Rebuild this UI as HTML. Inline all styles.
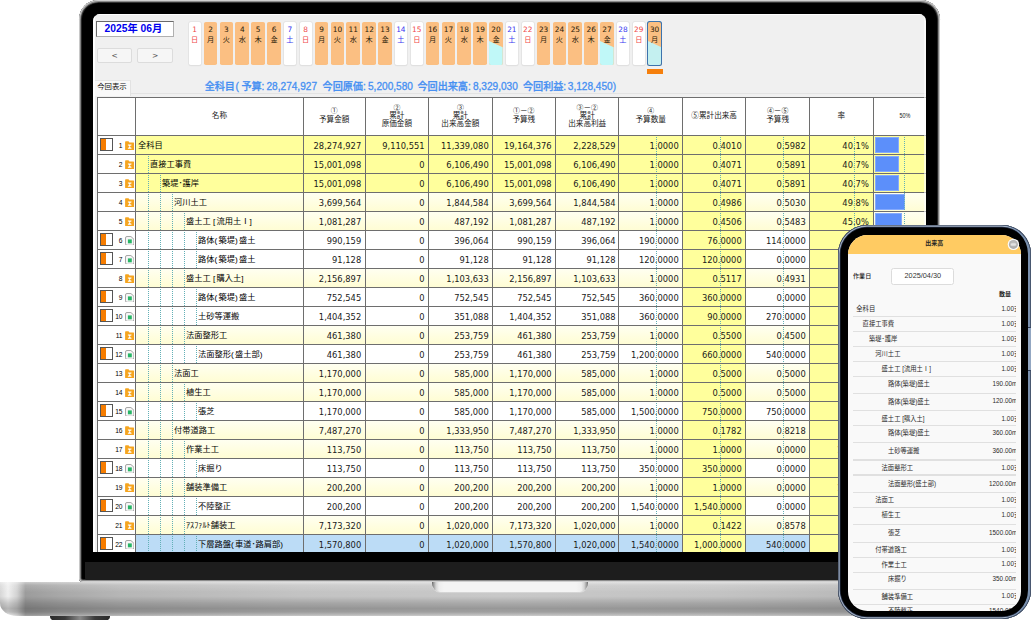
<!DOCTYPE html>
<html lang="ja"><head><meta charset="utf-8"><title>出来高</title>
<style>
html,body{margin:0;padding:0;background:#fff;}
body{width:1032px;height:620px;position:relative;overflow:hidden;font-family:"Liberation Sans","Noto Sans CJK JP",sans-serif;}
div,span,svg{position:absolute;box-sizing:border-box;}
.t{white-space:nowrap;line-height:1;}
.num{font-family:"DejaVu Sans","Liberation Sans",sans-serif;font-size:8px;color:#1a1a1a;text-align:right;white-space:nowrap;line-height:1;transform:scaleX(1.04);transform-origin:100% 50%;}
.nm{font-family:"Liberation Sans","Noto Sans CJK JP",sans-serif;font-size:7.7px;color:#000;white-space:nowrap;line-height:1;transform:scaleX(1.07);transform-origin:0 50%;}
.hd{font-family:"Liberation Sans","Noto Sans CJK JP",sans-serif;font-size:7.6px;color:#222;white-space:nowrap;line-height:7.4px;text-align:center;}
.rn{font-family:"Liberation Sans",sans-serif;font-size:7.6px;color:#000;text-align:right;white-space:nowrap;line-height:1;transform:scaleX(.88);transform-origin:100% 50%;}
.day{font-size:7.5px;line-height:1;text-align:center;white-space:nowrap;}
.c{position:static;font-size:6.9px;color:#111;}
.p{position:static;letter-spacing:1.2px;}
.pn{font-family:"Liberation Sans","Noto Sans CJK JP",sans-serif;font-size:6.3px;color:#2a2a2a;white-space:nowrap;line-height:1;}
.pv{font-family:"Liberation Sans","Noto Sans CJK JP",sans-serif;font-size:6.35px;color:#2a2a2a;white-space:nowrap;line-height:1;text-align:right;}
</style></head><body>

<div id="lid" style="left:79.2px;top:0px;width:861px;height:581.6px;background:#000;border-radius:19.5px 19.5px 4px 4px;box-shadow:inset 0 0 0 0.9px #d0d0d0, inset 0 0 0 1.9px #8c8c8c, inset 0 2.4px 0.8px -0.4px #a0a0a0, inset 0 0 0 2.9px #2c2c2c;"></div>
<div id="chin" style="left:84.8px;top:562.2px;width:849.6px;height:18.2px;background:#1d1d1d;border-radius:0 0 2px 2px;"></div>
<div id="base" style="left:0;top:581.5px;width:1019px;height:34.3px;border-radius:0 0 17px 17px / 0 0 13px 13px;background:linear-gradient(180deg,rgba(255,255,255,.5) 0%,rgba(255,255,255,.18) 9%,rgba(255,255,255,0) 30%,rgba(0,0,0,0) 42%,rgba(0,0,0,.15) 62%,rgba(0,0,0,.24) 78%,rgba(0,0,0,.2) 88%,rgba(0,0,0,.06) 96%,rgba(255,255,255,.1) 100%),linear-gradient(90deg,#d6d6d6 0px,#efefef 8px,#d2d2d2 17px,#9c9c9c 25.5px,#a8a8a8 60px,#b6b6b6 120px,#c3c3c3 300px,#c8c8c8 500px,#c3c3c3 719px,#b6b6b6 899px,#a8a8a8 959px,#9c9c9c 993.5px,#d2d2d2 1002px,#efefef 1011px,#d6d6d6 1019px);"></div>
<div style="left:431.6px;top:581.5px;width:156.2px;height:10.8px;border-radius:0 0 8px 8px / 0 0 9px 9px;background:linear-gradient(90deg,#5e5e5e 0,#9a9a9a 1.6px,#d4d4d4 4px,#eeeeee 7px,#f4f4f4 12px,#f4f4f4 144.2px,#eeeeee 149.2px,#d4d4d4 152.2px,#9a9a9a 154.6px,#5e5e5e 156.2px);box-shadow:0 0.6px 0.8px rgba(255,255,255,.5);"></div>
<div style="left:50px;top:615.6px;width:59.5px;height:6px;border-radius:0 0 10px 10px / 0 0 5px 5px;background:linear-gradient(90deg,#2a2a2a 0%,#3a3a3a 25%,#8a8a8a 50%,#3a3a3a 75%,#2a2a2a 100%);"></div>
<div id="screen" style="left:93.00px;top:13.60px;width:832.80px;height:538.30px;background:#f0f0f0;border-radius:7px 7px 0 0;overflow:hidden;">
<div style="left:2.60px;top:7.60px;width:78.40px;height:15.40px;background:#fff;border:1px solid;border-color:#6a6a6a #b0b0b0 #b0b0b0 #6a6a6a;"></div>
<div style="left:1.20px;top:7.60px;width:78.40px;height:15.40px;font-family:'Liberation Sans','Noto Sans CJK JP',sans-serif;font-weight:bold;font-size:10.3px;color:#0000ee;text-align:center;line-height:15.4px;white-space:nowrap;">2025年 06月</div>
<div style="left:4.00px;top:34.00px;width:35.40px;height:15.20px;background:#f6f6f6;border:1px solid #dcdcdc;border-radius:2px;font-family:'DejaVu Sans',sans-serif;font-size:7.5px;color:#555;text-align:center;line-height:13.4px;">&lt;</div>
<div style="left:44.40px;top:34.00px;width:35.40px;height:15.20px;background:#f6f6f6;border:1px solid #dcdcdc;border-radius:2px;font-family:'DejaVu Sans',sans-serif;font-size:7.5px;color:#555;text-align:center;line-height:13.4px;">&gt;</div>
<div style="left:95.75px;top:8.10px;width:11.90px;height:43.10px;background:#fff;border-radius:1.8px;box-shadow:0 0 0 0.8px #e2e2e2,0 1px 1px #d8d8d8;"></div>
<div class="day" style="left:91.75px;top:12.00px;width:19.90px;height:8.00px;color:#f04848;font-family:'DejaVu Sans','Liberation Sans',sans-serif;font-size:7.4px;">1</div>
<div class="day" style="left:91.75px;top:22.30px;width:19.90px;height:8.00px;color:#f04848;font-family:'Liberation Sans','Noto Sans CJK JP',sans-serif;font-size:7.2px;">日</div>
<div style="left:110.71px;top:8.10px;width:13.70px;height:43.10px;background:#fbbf82;border-radius:1.8px;"></div>
<div class="day" style="left:106.71px;top:12.00px;width:21.70px;height:8.00px;color:#2a1a08;font-family:'DejaVu Sans','Liberation Sans',sans-serif;font-size:7.4px;">2</div>
<div class="day" style="left:106.71px;top:22.30px;width:21.70px;height:8.00px;color:#2a1a08;font-family:'Liberation Sans','Noto Sans CJK JP',sans-serif;font-size:7.2px;">月</div>
<div style="left:126.57px;top:8.10px;width:13.70px;height:43.10px;background:#fbbf82;border-radius:1.8px;"></div>
<div class="day" style="left:122.57px;top:12.00px;width:21.70px;height:8.00px;color:#2a1a08;font-family:'DejaVu Sans','Liberation Sans',sans-serif;font-size:7.4px;">3</div>
<div class="day" style="left:122.57px;top:22.30px;width:21.70px;height:8.00px;color:#2a1a08;font-family:'Liberation Sans','Noto Sans CJK JP',sans-serif;font-size:7.2px;">火</div>
<div style="left:142.43px;top:8.10px;width:13.70px;height:43.10px;background:#fbbf82;border-radius:1.8px;"></div>
<div class="day" style="left:138.43px;top:12.00px;width:21.70px;height:8.00px;color:#2a1a08;font-family:'DejaVu Sans','Liberation Sans',sans-serif;font-size:7.4px;">4</div>
<div class="day" style="left:138.43px;top:22.30px;width:21.70px;height:8.00px;color:#2a1a08;font-family:'Liberation Sans','Noto Sans CJK JP',sans-serif;font-size:7.2px;">水</div>
<div style="left:158.29px;top:8.10px;width:13.70px;height:43.10px;background:#fbbf82;border-radius:1.8px;"></div>
<div class="day" style="left:154.29px;top:12.00px;width:21.70px;height:8.00px;color:#2a1a08;font-family:'DejaVu Sans','Liberation Sans',sans-serif;font-size:7.4px;">5</div>
<div class="day" style="left:154.29px;top:22.30px;width:21.70px;height:8.00px;color:#2a1a08;font-family:'Liberation Sans','Noto Sans CJK JP',sans-serif;font-size:7.2px;">木</div>
<div style="left:174.15px;top:8.10px;width:13.70px;height:43.10px;background:#fbbf82;border-radius:1.8px;"></div>
<div class="day" style="left:170.15px;top:12.00px;width:21.70px;height:8.00px;color:#2a1a08;font-family:'DejaVu Sans','Liberation Sans',sans-serif;font-size:7.4px;">6</div>
<div class="day" style="left:170.15px;top:22.30px;width:21.70px;height:8.00px;color:#2a1a08;font-family:'Liberation Sans','Noto Sans CJK JP',sans-serif;font-size:7.2px;">金</div>
<div style="left:190.91px;top:8.10px;width:11.90px;height:43.10px;background:#fff;border-radius:1.8px;box-shadow:0 0 0 0.8px #e2e2e2,0 1px 1px #d8d8d8;"></div>
<div class="day" style="left:186.91px;top:12.00px;width:19.90px;height:8.00px;color:#3838f0;font-family:'DejaVu Sans','Liberation Sans',sans-serif;font-size:7.4px;">7</div>
<div class="day" style="left:186.91px;top:22.30px;width:19.90px;height:8.00px;color:#3838f0;font-family:'Liberation Sans','Noto Sans CJK JP',sans-serif;font-size:7.2px;">土</div>
<div style="left:206.77px;top:8.10px;width:11.90px;height:43.10px;background:#fff;border-radius:1.8px;box-shadow:0 0 0 0.8px #e2e2e2,0 1px 1px #d8d8d8;"></div>
<div class="day" style="left:202.77px;top:12.00px;width:19.90px;height:8.00px;color:#f04848;font-family:'DejaVu Sans','Liberation Sans',sans-serif;font-size:7.4px;">8</div>
<div class="day" style="left:202.77px;top:22.30px;width:19.90px;height:8.00px;color:#f04848;font-family:'Liberation Sans','Noto Sans CJK JP',sans-serif;font-size:7.2px;">日</div>
<div style="left:221.73px;top:8.10px;width:13.70px;height:43.10px;background:#fbbf82;border-radius:1.8px;"></div>
<div class="day" style="left:217.73px;top:12.00px;width:21.70px;height:8.00px;color:#2a1a08;font-family:'DejaVu Sans','Liberation Sans',sans-serif;font-size:7.4px;">9</div>
<div class="day" style="left:217.73px;top:22.30px;width:21.70px;height:8.00px;color:#2a1a08;font-family:'Liberation Sans','Noto Sans CJK JP',sans-serif;font-size:7.2px;">月</div>
<div style="left:237.59px;top:8.10px;width:13.70px;height:43.10px;background:#fbbf82;border-radius:1.8px;"></div>
<div class="day" style="left:233.59px;top:12.00px;width:21.70px;height:8.00px;color:#2a1a08;font-family:'DejaVu Sans','Liberation Sans',sans-serif;font-size:7.4px;">10</div>
<div class="day" style="left:233.59px;top:22.30px;width:21.70px;height:8.00px;color:#2a1a08;font-family:'Liberation Sans','Noto Sans CJK JP',sans-serif;font-size:7.2px;">火</div>
<div style="left:253.45px;top:8.10px;width:13.70px;height:43.10px;background:#fbbf82;border-radius:1.8px;"></div>
<div class="day" style="left:249.45px;top:12.00px;width:21.70px;height:8.00px;color:#2a1a08;font-family:'DejaVu Sans','Liberation Sans',sans-serif;font-size:7.4px;">11</div>
<div class="day" style="left:249.45px;top:22.30px;width:21.70px;height:8.00px;color:#2a1a08;font-family:'Liberation Sans','Noto Sans CJK JP',sans-serif;font-size:7.2px;">水</div>
<div style="left:269.31px;top:8.10px;width:13.70px;height:43.10px;background:#fbbf82;border-radius:1.8px;"></div>
<div class="day" style="left:265.31px;top:12.00px;width:21.70px;height:8.00px;color:#2a1a08;font-family:'DejaVu Sans','Liberation Sans',sans-serif;font-size:7.4px;">12</div>
<div class="day" style="left:265.31px;top:22.30px;width:21.70px;height:8.00px;color:#2a1a08;font-family:'Liberation Sans','Noto Sans CJK JP',sans-serif;font-size:7.2px;">木</div>
<div style="left:285.17px;top:8.10px;width:13.70px;height:43.10px;background:#fbbf82;border-radius:1.8px;"></div>
<div class="day" style="left:281.17px;top:12.00px;width:21.70px;height:8.00px;color:#2a1a08;font-family:'DejaVu Sans','Liberation Sans',sans-serif;font-size:7.4px;">13</div>
<div class="day" style="left:281.17px;top:22.30px;width:21.70px;height:8.00px;color:#2a1a08;font-family:'Liberation Sans','Noto Sans CJK JP',sans-serif;font-size:7.2px;">金</div>
<div style="left:301.93px;top:8.10px;width:11.90px;height:43.10px;background:#fff;border-radius:1.8px;box-shadow:0 0 0 0.8px #e2e2e2,0 1px 1px #d8d8d8;"></div>
<div class="day" style="left:297.93px;top:12.00px;width:19.90px;height:8.00px;color:#3838f0;font-family:'DejaVu Sans','Liberation Sans',sans-serif;font-size:7.4px;">14</div>
<div class="day" style="left:297.93px;top:22.30px;width:19.90px;height:8.00px;color:#3838f0;font-family:'Liberation Sans','Noto Sans CJK JP',sans-serif;font-size:7.2px;">土</div>
<div style="left:317.79px;top:8.10px;width:11.90px;height:43.10px;background:#fff;border-radius:1.8px;box-shadow:0 0 0 0.8px #e2e2e2,0 1px 1px #d8d8d8;"></div>
<div class="day" style="left:313.79px;top:12.00px;width:19.90px;height:8.00px;color:#f04848;font-family:'DejaVu Sans','Liberation Sans',sans-serif;font-size:7.4px;">15</div>
<div class="day" style="left:313.79px;top:22.30px;width:19.90px;height:8.00px;color:#f04848;font-family:'Liberation Sans','Noto Sans CJK JP',sans-serif;font-size:7.2px;">日</div>
<div style="left:332.75px;top:8.10px;width:13.70px;height:43.10px;background:#fbbf82;border-radius:1.8px;"></div>
<div class="day" style="left:328.75px;top:12.00px;width:21.70px;height:8.00px;color:#2a1a08;font-family:'DejaVu Sans','Liberation Sans',sans-serif;font-size:7.4px;">16</div>
<div class="day" style="left:328.75px;top:22.30px;width:21.70px;height:8.00px;color:#2a1a08;font-family:'Liberation Sans','Noto Sans CJK JP',sans-serif;font-size:7.2px;">月</div>
<div style="left:348.61px;top:8.10px;width:13.70px;height:43.10px;background:#fbbf82;border-radius:1.8px;"></div>
<div class="day" style="left:344.61px;top:12.00px;width:21.70px;height:8.00px;color:#2a1a08;font-family:'DejaVu Sans','Liberation Sans',sans-serif;font-size:7.4px;">17</div>
<div class="day" style="left:344.61px;top:22.30px;width:21.70px;height:8.00px;color:#2a1a08;font-family:'Liberation Sans','Noto Sans CJK JP',sans-serif;font-size:7.2px;">火</div>
<div style="left:364.47px;top:8.10px;width:13.70px;height:43.10px;background:#fbbf82;border-radius:1.8px;"></div>
<div class="day" style="left:360.47px;top:12.00px;width:21.70px;height:8.00px;color:#2a1a08;font-family:'DejaVu Sans','Liberation Sans',sans-serif;font-size:7.4px;">18</div>
<div class="day" style="left:360.47px;top:22.30px;width:21.70px;height:8.00px;color:#2a1a08;font-family:'Liberation Sans','Noto Sans CJK JP',sans-serif;font-size:7.2px;">水</div>
<div style="left:380.33px;top:8.10px;width:13.70px;height:43.10px;background:#fbbf82;border-radius:1.8px;"></div>
<div class="day" style="left:376.33px;top:12.00px;width:21.70px;height:8.00px;color:#2a1a08;font-family:'DejaVu Sans','Liberation Sans',sans-serif;font-size:7.4px;">19</div>
<div class="day" style="left:376.33px;top:22.30px;width:21.70px;height:8.00px;color:#2a1a08;font-family:'Liberation Sans','Noto Sans CJK JP',sans-serif;font-size:7.2px;">木</div>
<div style="left:396.19px;top:8.10px;width:13.70px;height:43.10px;border-radius:2px;background:linear-gradient(to bottom,#fbbf82,#fbbf82);overflow:hidden;"><svg width="13.70" height="43.1" viewBox="0 0 13.70 43.1" style="left:0;top:0"><polygon points="0,19 13.70,25.2 13.70,43.1 0,43.1" fill="#c0f8f8"/></svg></div>
<div class="day" style="left:392.19px;top:12.00px;width:21.70px;height:8.00px;color:#2a1a08;font-family:'DejaVu Sans','Liberation Sans',sans-serif;font-size:7.4px;">20</div>
<div class="day" style="left:392.19px;top:22.30px;width:21.70px;height:8.00px;color:#2a1a08;font-family:'Liberation Sans','Noto Sans CJK JP',sans-serif;font-size:7.2px;">金</div>
<div style="left:412.95px;top:8.10px;width:11.90px;height:43.10px;background:#fff;border-radius:1.8px;box-shadow:0 0 0 0.8px #e2e2e2,0 1px 1px #d8d8d8;"></div>
<div class="day" style="left:408.95px;top:12.00px;width:19.90px;height:8.00px;color:#3838f0;font-family:'DejaVu Sans','Liberation Sans',sans-serif;font-size:7.4px;">21</div>
<div class="day" style="left:408.95px;top:22.30px;width:19.90px;height:8.00px;color:#3838f0;font-family:'Liberation Sans','Noto Sans CJK JP',sans-serif;font-size:7.2px;">土</div>
<div style="left:428.81px;top:8.10px;width:11.90px;height:43.10px;background:#fff;border-radius:1.8px;box-shadow:0 0 0 0.8px #e2e2e2,0 1px 1px #d8d8d8;"></div>
<div class="day" style="left:424.81px;top:12.00px;width:19.90px;height:8.00px;color:#f04848;font-family:'DejaVu Sans','Liberation Sans',sans-serif;font-size:7.4px;">22</div>
<div class="day" style="left:424.81px;top:22.30px;width:19.90px;height:8.00px;color:#f04848;font-family:'Liberation Sans','Noto Sans CJK JP',sans-serif;font-size:7.2px;">日</div>
<div style="left:443.77px;top:8.10px;width:13.70px;height:43.10px;background:#fbbf82;border-radius:1.8px;"></div>
<div class="day" style="left:439.77px;top:12.00px;width:21.70px;height:8.00px;color:#2a1a08;font-family:'DejaVu Sans','Liberation Sans',sans-serif;font-size:7.4px;">23</div>
<div class="day" style="left:439.77px;top:22.30px;width:21.70px;height:8.00px;color:#2a1a08;font-family:'Liberation Sans','Noto Sans CJK JP',sans-serif;font-size:7.2px;">月</div>
<div style="left:459.63px;top:8.10px;width:13.70px;height:43.10px;background:#fbbf82;border-radius:1.8px;"></div>
<div class="day" style="left:455.63px;top:12.00px;width:21.70px;height:8.00px;color:#2a1a08;font-family:'DejaVu Sans','Liberation Sans',sans-serif;font-size:7.4px;">24</div>
<div class="day" style="left:455.63px;top:22.30px;width:21.70px;height:8.00px;color:#2a1a08;font-family:'Liberation Sans','Noto Sans CJK JP',sans-serif;font-size:7.2px;">火</div>
<div style="left:475.49px;top:8.10px;width:13.70px;height:43.10px;background:#fbbf82;border-radius:1.8px;"></div>
<div class="day" style="left:471.49px;top:12.00px;width:21.70px;height:8.00px;color:#2a1a08;font-family:'DejaVu Sans','Liberation Sans',sans-serif;font-size:7.4px;">25</div>
<div class="day" style="left:471.49px;top:22.30px;width:21.70px;height:8.00px;color:#2a1a08;font-family:'Liberation Sans','Noto Sans CJK JP',sans-serif;font-size:7.2px;">水</div>
<div style="left:491.35px;top:8.10px;width:13.70px;height:43.10px;background:#fbbf82;border-radius:1.8px;"></div>
<div class="day" style="left:487.35px;top:12.00px;width:21.70px;height:8.00px;color:#2a1a08;font-family:'DejaVu Sans','Liberation Sans',sans-serif;font-size:7.4px;">26</div>
<div class="day" style="left:487.35px;top:22.30px;width:21.70px;height:8.00px;color:#2a1a08;font-family:'Liberation Sans','Noto Sans CJK JP',sans-serif;font-size:7.2px;">木</div>
<div style="left:507.21px;top:8.10px;width:13.70px;height:43.10px;border-radius:2px;background:linear-gradient(to bottom,#fbbf82,#fbbf82);overflow:hidden;"><svg width="13.70" height="43.1" viewBox="0 0 13.70 43.1" style="left:0;top:0"><polygon points="0,19 13.70,25.2 13.70,43.1 0,43.1" fill="#c0f8f8"/></svg></div>
<div class="day" style="left:503.21px;top:12.00px;width:21.70px;height:8.00px;color:#2a1a08;font-family:'DejaVu Sans','Liberation Sans',sans-serif;font-size:7.4px;">27</div>
<div class="day" style="left:503.21px;top:22.30px;width:21.70px;height:8.00px;color:#2a1a08;font-family:'Liberation Sans','Noto Sans CJK JP',sans-serif;font-size:7.2px;">金</div>
<div style="left:523.97px;top:8.10px;width:11.90px;height:43.10px;background:#fff;border-radius:1.8px;box-shadow:0 0 0 0.8px #e2e2e2,0 1px 1px #d8d8d8;"></div>
<div class="day" style="left:519.97px;top:12.00px;width:19.90px;height:8.00px;color:#3838f0;font-family:'DejaVu Sans','Liberation Sans',sans-serif;font-size:7.4px;">28</div>
<div class="day" style="left:519.97px;top:22.30px;width:19.90px;height:8.00px;color:#3838f0;font-family:'Liberation Sans','Noto Sans CJK JP',sans-serif;font-size:7.2px;">土</div>
<div style="left:539.83px;top:8.10px;width:11.90px;height:43.10px;background:#fff;border-radius:1.8px;box-shadow:0 0 0 0.8px #e2e2e2,0 1px 1px #d8d8d8;"></div>
<div class="day" style="left:535.83px;top:12.00px;width:19.90px;height:8.00px;color:#f04848;font-family:'DejaVu Sans','Liberation Sans',sans-serif;font-size:7.4px;">29</div>
<div class="day" style="left:535.83px;top:22.30px;width:19.90px;height:8.00px;color:#f04848;font-family:'Liberation Sans','Noto Sans CJK JP',sans-serif;font-size:7.2px;">日</div>
<div style="left:553.89px;top:7.30px;width:15.50px;height:44.70px;border-radius:2.5px;background:#3d73ad;"></div>
<div style="left:554.79px;top:8.10px;width:13.70px;height:43.10px;border-radius:2px;background:linear-gradient(to bottom,#fbbf82,#fbbf82);overflow:hidden;"><svg width="13.70" height="43.1" viewBox="0 0 13.70 43.1" style="left:0;top:0"><polygon points="0,19 13.70,25.2 13.70,43.1 0,43.1" fill="#c4f0f0"/></svg></div>
<div class="day" style="left:550.79px;top:12.00px;width:21.70px;height:8.00px;color:#2a1a08;font-family:'DejaVu Sans','Liberation Sans',sans-serif;font-size:7.4px;">30</div>
<div class="day" style="left:550.79px;top:22.30px;width:21.70px;height:8.00px;color:#2a1a08;font-family:'Liberation Sans','Noto Sans CJK JP',sans-serif;font-size:7.2px;">月</div>
<div style="left:553.90px;top:55.80px;width:15.90px;height:5.10px;background:#f57f0c;"></div>
<div style="left:0.00px;top:66.20px;width:38.40px;height:15.80px;background:#f9f9f9;border-top:1px solid #e6e6e6;border-right:1px solid #e2e2e2;"></div>
<div style="left:38.40px;top:79.00px;width:800.00px;height:1.40px;background:#e3e3e3;"></div>
<div class="t" style="left:4.20px;top:69.16px;width:40.00px;height:8.00px;font-size:7.4px;color:#111;">今回表示</div>
<div style="left:111.70px;top:68.20px;width:420.00px;height:11.00px;font-family:'Liberation Sans','Noto Sans CJK JP',sans-serif;font-weight:500;-webkit-text-stroke:0.3px #4790f2;font-size:10.1px;color:#4790f2;"><span class="t" style="left:0.0px;top:0">全科目</span><span class="t" style="left:30.7px;top:0">(</span><span class="t" style="left:36.7px;top:0">予算:</span><span class="t" style="left:61.8px;top:0">28,274,927</span><span class="t" style="left:117.9px;top:0">今回原価:</span><span class="t" style="left:163.3px;top:0">5,200,580</span><span class="t" style="left:212.8px;top:0">今回出来高:</span><span class="t" style="left:268.2px;top:0">8,329,030</span><span class="t" style="left:318.3px;top:0">今回利益:</span><span class="t" style="left:363.1px;top:0">3,128,450)</span></div>
<div style="left:4.20px;top:84.10px;width:828.60px;height:37.50px;background:#fff;"></div>
<div class="hd" style="left:42.60px;top:98.85px;width:167.60px;height:8.00px;line-height:8.0px;font-size:7.6px;">名称</div>
<div class="hd" style="left:210.20px;top:93.65px;width:62.00px;height:17.20px;line-height:8.6px;font-size:7.6px;"><span class="c">①</span><br>予算金額</div>
<div class="hd" style="left:272.20px;top:90.85px;width:63.40px;height:22.80px;line-height:7.6px;font-size:7.6px;"><span class="c">②</span><br>累計<br>原価金額</div>
<div class="hd" style="left:335.60px;top:90.85px;width:63.50px;height:22.80px;line-height:7.6px;font-size:7.6px;"><span class="c">③</span><br>累計<br>出来高金額</div>
<div class="hd" style="left:399.10px;top:93.65px;width:63.40px;height:17.20px;line-height:8.6px;font-size:7.6px;"><span class="c">①</span>－<span class="c">②</span><br>予算残</div>
<div class="hd" style="left:462.50px;top:90.85px;width:63.40px;height:22.80px;line-height:7.6px;font-size:7.6px;"><span class="c">③</span>－<span class="c">②</span><br>累計<br>出来高利益</div>
<div class="hd" style="left:525.90px;top:93.65px;width:63.50px;height:17.20px;line-height:8.6px;font-size:7.6px;"><span class="c">④</span><br>予算数量</div>
<div class="hd" style="left:589.40px;top:98.85px;width:63.50px;height:8.00px;line-height:8.0px;font-size:7.6px;">⑤累計出来高</div>
<div class="hd" style="left:652.90px;top:93.65px;width:63.50px;height:17.20px;line-height:8.6px;font-size:7.6px;"><span class="c">④</span>－<span class="c">⑤</span><br>予算残</div>
<div class="hd" style="left:716.40px;top:98.85px;width:63.60px;height:8.00px;line-height:8.0px;font-size:7.6px;">率</div>
<div class="hd" style="left:780.00px;top:98.85px;width:63.80px;height:8.00px;line-height:8.0px;font-size:7px;font-family:'Liberation Sans',sans-serif;transform:scaleX(.78);">50%</div>
<div style="left:4.20px;top:121.60px;width:38.40px;height:19.00px;background:#fff;"></div>
<div style="left:42.60px;top:121.60px;width:790.20px;height:19.00px;background:#ffff9c;"></div>
<div style="left:589.40px;top:121.60px;width:63.50px;height:19.00px;background:#ffff9c;"></div>
<div style="left:716.40px;top:121.60px;width:63.60px;height:19.00px;background:#ffff9c;"></div>
<div style="left:6.60px;top:124.70px;width:13.20px;height:12.80px;background:linear-gradient(90deg,#f57c00 0,#f57c00 42%,#fff 42%);border:0.9px solid #555;"></div>
<div class="rn" style="left:11.00px;top:128.30px;width:18.60px;height:8.00px;">1</div>
<div style="left:31.60px;top:127.00px;width:9.20px;height:9.50px;"><svg width="9.2" height="9.5" viewBox="0 0 9.2 9.5" style="left:0;top:0"><path d="M.9 .2h2.6l.9 1.3h3.9a.8.8 0 0 1 .8.8v6.1a.8.8 0 0 1-.8.8H.9a.8.8 0 0 1-.8-.8V1a.8.8 0 0 1 .8-.8z" fill="#f5a520"/><path d="M2.9 3.5h3.6v.9H5.9L4.9 5.6l1 1.2h.6v.9H2.9v-.9h.6l1-1.2-1-1.2h-.6z" fill="#fff"/></svg></div>
<div class="nm" style="left:45.00px;top:128.90px;width:160.00px;height:9.00px;">全科目</div>
<div class="num" style="left:210.20px;top:129.00px;width:58.20px;height:9.00px;">28,274,927</div>
<div class="num" style="left:272.20px;top:129.00px;width:59.60px;height:9.00px;">9,110,551</div>
<div class="num" style="left:335.60px;top:129.00px;width:59.70px;height:9.00px;">11,339,080</div>
<div class="num" style="left:399.10px;top:129.00px;width:59.60px;height:9.00px;">19,164,376</div>
<div class="num" style="left:462.50px;top:129.00px;width:59.60px;height:9.00px;">2,228,529</div>
<div class="num" style="left:525.90px;top:129.00px;width:59.70px;height:9.00px;">1.0000</div>
<div class="num" style="left:589.40px;top:129.00px;width:59.70px;height:9.00px;">0.4010</div>
<div class="num" style="left:652.90px;top:129.00px;width:59.70px;height:9.00px;">0.5982</div>
<div class="num" style="left:716.40px;top:129.00px;width:59.80px;height:9.00px;">40.1%</div>
<div style="left:782.00px;top:123.20px;width:24.06px;height:16.60px;background:#5c8ffa;border:0.6px solid #86aafc;"></div>
<div style="left:4.20px;top:140.60px;width:38.40px;height:19.00px;background:#fff;"></div>
<div style="left:42.60px;top:140.60px;width:790.20px;height:19.00px;background:#ffff9c;"></div>
<div style="left:589.40px;top:140.60px;width:63.50px;height:19.00px;background:#ffff9c;"></div>
<div style="left:716.40px;top:140.60px;width:63.60px;height:19.00px;background:#ffff9c;"></div>
<div class="rn" style="left:11.00px;top:147.30px;width:18.60px;height:8.00px;">2</div>
<div style="left:31.60px;top:146.00px;width:9.20px;height:9.50px;"><svg width="9.2" height="9.5" viewBox="0 0 9.2 9.5" style="left:0;top:0"><path d="M.9 .2h2.6l.9 1.3h3.9a.8.8 0 0 1 .8.8v6.1a.8.8 0 0 1-.8.8H.9a.8.8 0 0 1-.8-.8V1a.8.8 0 0 1 .8-.8z" fill="#f5a520"/><path d="M2.9 3.5h3.6v.9H5.9L4.9 5.6l1 1.2h.6v.9H2.9v-.9h.6l1-1.2-1-1.2h-.6z" fill="#fff"/></svg></div>
<div class="nm" style="left:57.03px;top:147.90px;width:160.00px;height:9.00px;">直接工事費</div>
<div class="num" style="left:210.20px;top:148.00px;width:58.20px;height:9.00px;">15,001,098</div>
<div class="num" style="left:272.20px;top:148.00px;width:59.60px;height:9.00px;">0</div>
<div class="num" style="left:335.60px;top:148.00px;width:59.70px;height:9.00px;">6,106,490</div>
<div class="num" style="left:399.10px;top:148.00px;width:59.60px;height:9.00px;">15,001,098</div>
<div class="num" style="left:462.50px;top:148.00px;width:59.60px;height:9.00px;">6,106,490</div>
<div class="num" style="left:525.90px;top:148.00px;width:59.70px;height:9.00px;">1.0000</div>
<div class="num" style="left:589.40px;top:148.00px;width:59.70px;height:9.00px;">0.4071</div>
<div class="num" style="left:652.90px;top:148.00px;width:59.70px;height:9.00px;">0.5891</div>
<div class="num" style="left:716.40px;top:148.00px;width:59.80px;height:9.00px;">40.7%</div>
<div style="left:782.00px;top:142.20px;width:24.42px;height:16.60px;background:#5c8ffa;border:0.6px solid #86aafc;"></div>
<div style="left:4.20px;top:159.60px;width:38.40px;height:19.00px;background:#fff;"></div>
<div style="left:42.60px;top:159.60px;width:790.20px;height:19.00px;background:#ffff9c;"></div>
<div style="left:589.40px;top:159.60px;width:63.50px;height:19.00px;background:#ffff9c;"></div>
<div style="left:716.40px;top:159.60px;width:63.60px;height:19.00px;background:#ffff9c;"></div>
<div class="rn" style="left:11.00px;top:166.30px;width:18.60px;height:8.00px;">3</div>
<div style="left:31.60px;top:165.00px;width:9.20px;height:9.50px;"><svg width="9.2" height="9.5" viewBox="0 0 9.2 9.5" style="left:0;top:0"><path d="M.9 .2h2.6l.9 1.3h3.9a.8.8 0 0 1 .8.8v6.1a.8.8 0 0 1-.8.8H.9a.8.8 0 0 1-.8-.8V1a.8.8 0 0 1 .8-.8z" fill="#f5a520"/><path d="M2.9 3.5h3.6v.9H5.9L4.9 5.6l1 1.2h.6v.9H2.9v-.9h.6l1-1.2-1-1.2h-.6z" fill="#fff"/></svg></div>
<div class="nm" style="left:69.06px;top:166.90px;width:160.00px;height:9.00px;">築堤･護岸</div>
<div class="num" style="left:210.20px;top:167.00px;width:58.20px;height:9.00px;">15,001,098</div>
<div class="num" style="left:272.20px;top:167.00px;width:59.60px;height:9.00px;">0</div>
<div class="num" style="left:335.60px;top:167.00px;width:59.70px;height:9.00px;">6,106,490</div>
<div class="num" style="left:399.10px;top:167.00px;width:59.60px;height:9.00px;">15,001,098</div>
<div class="num" style="left:462.50px;top:167.00px;width:59.60px;height:9.00px;">6,106,490</div>
<div class="num" style="left:525.90px;top:167.00px;width:59.70px;height:9.00px;">1.0000</div>
<div class="num" style="left:589.40px;top:167.00px;width:59.70px;height:9.00px;">0.4071</div>
<div class="num" style="left:652.90px;top:167.00px;width:59.70px;height:9.00px;">0.5891</div>
<div class="num" style="left:716.40px;top:167.00px;width:59.80px;height:9.00px;">40.7%</div>
<div style="left:782.00px;top:161.20px;width:24.42px;height:16.60px;background:#5c8ffa;border:0.6px solid #86aafc;"></div>
<div style="left:4.20px;top:178.60px;width:38.40px;height:19.00px;background:#fff;"></div>
<div style="left:42.60px;top:178.60px;width:790.20px;height:19.00px;background:linear-gradient(180deg,#fffff2,#fffdd4);"></div>
<div style="left:589.40px;top:178.60px;width:63.50px;height:19.00px;background:#ffff9c;"></div>
<div style="left:716.40px;top:178.60px;width:63.60px;height:19.00px;background:#ffff9c;"></div>
<div class="rn" style="left:11.00px;top:185.30px;width:18.60px;height:8.00px;">4</div>
<div style="left:31.60px;top:184.00px;width:9.20px;height:9.50px;"><svg width="9.2" height="9.5" viewBox="0 0 9.2 9.5" style="left:0;top:0"><path d="M.9 .2h2.6l.9 1.3h3.9a.8.8 0 0 1 .8.8v6.1a.8.8 0 0 1-.8.8H.9a.8.8 0 0 1-.8-.8V1a.8.8 0 0 1 .8-.8z" fill="#f5a520"/><path d="M2.9 3.5h3.6v.9H5.9L4.9 5.6l1 1.2h.6v.9H2.9v-.9h.6l1-1.2-1-1.2h-.6z" fill="#fff"/></svg></div>
<div class="nm" style="left:81.09px;top:185.90px;width:160.00px;height:9.00px;">河川土工</div>
<div class="num" style="left:210.20px;top:186.00px;width:58.20px;height:9.00px;">3,699,564</div>
<div class="num" style="left:272.20px;top:186.00px;width:59.60px;height:9.00px;">0</div>
<div class="num" style="left:335.60px;top:186.00px;width:59.70px;height:9.00px;">1,844,584</div>
<div class="num" style="left:399.10px;top:186.00px;width:59.60px;height:9.00px;">3,699,564</div>
<div class="num" style="left:462.50px;top:186.00px;width:59.60px;height:9.00px;">1,844,584</div>
<div class="num" style="left:525.90px;top:186.00px;width:59.70px;height:9.00px;">1.0000</div>
<div class="num" style="left:589.40px;top:186.00px;width:59.70px;height:9.00px;">0.4986</div>
<div class="num" style="left:652.90px;top:186.00px;width:59.70px;height:9.00px;">0.5030</div>
<div class="num" style="left:716.40px;top:186.00px;width:59.80px;height:9.00px;">49.8%</div>
<div style="left:782.00px;top:180.20px;width:29.88px;height:16.60px;background:#5c8ffa;border:0.6px solid #86aafc;"></div>
<div style="left:4.20px;top:197.60px;width:38.40px;height:19.00px;background:#fff;"></div>
<div style="left:42.60px;top:197.60px;width:790.20px;height:19.00px;background:linear-gradient(180deg,#fffff2,#fffdd4);"></div>
<div style="left:589.40px;top:197.60px;width:63.50px;height:19.00px;background:#ffff9c;"></div>
<div style="left:716.40px;top:197.60px;width:63.60px;height:19.00px;background:#ffff9c;"></div>
<div class="rn" style="left:11.00px;top:204.30px;width:18.60px;height:8.00px;">5</div>
<div style="left:31.60px;top:203.00px;width:9.20px;height:9.50px;"><svg width="9.2" height="9.5" viewBox="0 0 9.2 9.5" style="left:0;top:0"><path d="M.9 .2h2.6l.9 1.3h3.9a.8.8 0 0 1 .8.8v6.1a.8.8 0 0 1-.8.8H.9a.8.8 0 0 1-.8-.8V1a.8.8 0 0 1 .8-.8z" fill="#f5a520"/><path d="M2.9 3.5h3.6v.9H5.9L4.9 5.6l1 1.2h.6v.9H2.9v-.9h.6l1-1.2-1-1.2h-.6z" fill="#fff"/></svg></div>
<div class="nm" style="left:93.12px;top:204.90px;width:160.00px;height:9.00px;">盛土工 <span class="p">[</span>流用土Ⅰ<span class="p">]</span></div>
<div class="num" style="left:210.20px;top:205.00px;width:58.20px;height:9.00px;">1,081,287</div>
<div class="num" style="left:272.20px;top:205.00px;width:59.60px;height:9.00px;">0</div>
<div class="num" style="left:335.60px;top:205.00px;width:59.70px;height:9.00px;">487,192</div>
<div class="num" style="left:399.10px;top:205.00px;width:59.60px;height:9.00px;">1,081,287</div>
<div class="num" style="left:462.50px;top:205.00px;width:59.60px;height:9.00px;">487,192</div>
<div class="num" style="left:525.90px;top:205.00px;width:59.70px;height:9.00px;">1.0000</div>
<div class="num" style="left:589.40px;top:205.00px;width:59.70px;height:9.00px;">0.4506</div>
<div class="num" style="left:652.90px;top:205.00px;width:59.70px;height:9.00px;">0.5483</div>
<div class="num" style="left:716.40px;top:205.00px;width:59.80px;height:9.00px;">45.0%</div>
<div style="left:782.00px;top:199.20px;width:27.00px;height:16.60px;background:#5c8ffa;border:0.6px solid #86aafc;"></div>
<div style="left:4.20px;top:216.60px;width:38.40px;height:19.00px;background:#fff;"></div>
<div style="left:42.60px;top:216.60px;width:790.20px;height:19.00px;background:#fff;"></div>
<div style="left:589.40px;top:216.60px;width:63.50px;height:19.00px;background:#ffff9c;"></div>
<div style="left:716.40px;top:216.60px;width:63.60px;height:19.00px;background:#ffff9c;"></div>
<div style="left:6.60px;top:219.70px;width:13.20px;height:12.80px;background:linear-gradient(90deg,#f57c00 0,#f57c00 42%,#fff 42%);border:0.9px solid #555;"></div>
<div class="rn" style="left:11.00px;top:223.30px;width:18.60px;height:8.00px;">6</div>
<div style="left:31.50px;top:222.10px;width:9.40px;height:9.80px;"><svg width="9.4" height="9.8" viewBox="0 0 9.4 9.8" style="left:0;top:0"><path d="M.5 2A1.5 1.5 0 0 1 2 .5h3.9l3 2.7v4.6a1.5 1.5 0 0 1-1.5 1.5H2A1.5 1.5 0 0 1 .5 7.8z" fill="#f6f6f6" stroke="#909090" stroke-width=".8"/><rect x="2.9" y="3.4" width="3.9" height="3.9" fill="#27b566"/></svg></div>
<div class="nm" style="left:105.15px;top:223.90px;width:160.00px;height:9.00px;">路体<span class="p">(</span>築堤<span class="p">)</span>盛土</div>
<div class="num" style="left:210.20px;top:224.00px;width:58.20px;height:9.00px;">990,159</div>
<div class="num" style="left:272.20px;top:224.00px;width:59.60px;height:9.00px;">0</div>
<div class="num" style="left:335.60px;top:224.00px;width:59.70px;height:9.00px;">396,064</div>
<div class="num" style="left:399.10px;top:224.00px;width:59.60px;height:9.00px;">990,159</div>
<div class="num" style="left:462.50px;top:224.00px;width:59.60px;height:9.00px;">396,064</div>
<div class="num" style="left:525.90px;top:224.00px;width:59.70px;height:9.00px;">190.0000</div>
<div class="num" style="left:589.40px;top:224.00px;width:59.70px;height:9.00px;">76.0000</div>
<div class="num" style="left:652.90px;top:224.00px;width:59.70px;height:9.00px;">114.0000</div>
<div style="left:4.20px;top:235.60px;width:38.40px;height:19.00px;background:#fff;"></div>
<div style="left:42.60px;top:235.60px;width:790.20px;height:19.00px;background:#fff;"></div>
<div style="left:589.40px;top:235.60px;width:63.50px;height:19.00px;background:#ffff9c;"></div>
<div style="left:716.40px;top:235.60px;width:63.60px;height:19.00px;background:#ffff9c;"></div>
<div style="left:6.60px;top:238.70px;width:13.20px;height:12.80px;background:linear-gradient(90deg,#f57c00 0,#f57c00 42%,#fff 42%);border:0.9px solid #555;"></div>
<div class="rn" style="left:11.00px;top:242.30px;width:18.60px;height:8.00px;">7</div>
<div style="left:31.50px;top:241.10px;width:9.40px;height:9.80px;"><svg width="9.4" height="9.8" viewBox="0 0 9.4 9.8" style="left:0;top:0"><path d="M.5 2A1.5 1.5 0 0 1 2 .5h3.9l3 2.7v4.6a1.5 1.5 0 0 1-1.5 1.5H2A1.5 1.5 0 0 1 .5 7.8z" fill="#f6f6f6" stroke="#909090" stroke-width=".8"/><rect x="2.9" y="3.4" width="3.9" height="3.9" fill="#27b566"/></svg></div>
<div class="nm" style="left:105.15px;top:242.90px;width:160.00px;height:9.00px;">路体<span class="p">(</span>築堤<span class="p">)</span>盛土</div>
<div class="num" style="left:210.20px;top:243.00px;width:58.20px;height:9.00px;">91,128</div>
<div class="num" style="left:272.20px;top:243.00px;width:59.60px;height:9.00px;">0</div>
<div class="num" style="left:335.60px;top:243.00px;width:59.70px;height:9.00px;">91,128</div>
<div class="num" style="left:399.10px;top:243.00px;width:59.60px;height:9.00px;">91,128</div>
<div class="num" style="left:462.50px;top:243.00px;width:59.60px;height:9.00px;">91,128</div>
<div class="num" style="left:525.90px;top:243.00px;width:59.70px;height:9.00px;">120.0000</div>
<div class="num" style="left:589.40px;top:243.00px;width:59.70px;height:9.00px;">120.0000</div>
<div class="num" style="left:652.90px;top:243.00px;width:59.70px;height:9.00px;">0.0000</div>
<div style="left:4.20px;top:254.60px;width:38.40px;height:19.00px;background:#fff;"></div>
<div style="left:42.60px;top:254.60px;width:790.20px;height:19.00px;background:linear-gradient(180deg,#fffff2,#fffdd4);"></div>
<div style="left:589.40px;top:254.60px;width:63.50px;height:19.00px;background:#ffff9c;"></div>
<div style="left:716.40px;top:254.60px;width:63.60px;height:19.00px;background:#ffff9c;"></div>
<div class="rn" style="left:11.00px;top:261.30px;width:18.60px;height:8.00px;">8</div>
<div style="left:31.60px;top:260.00px;width:9.20px;height:9.50px;"><svg width="9.2" height="9.5" viewBox="0 0 9.2 9.5" style="left:0;top:0"><path d="M.9 .2h2.6l.9 1.3h3.9a.8.8 0 0 1 .8.8v6.1a.8.8 0 0 1-.8.8H.9a.8.8 0 0 1-.8-.8V1a.8.8 0 0 1 .8-.8z" fill="#f5a520"/><path d="M2.9 3.5h3.6v.9H5.9L4.9 5.6l1 1.2h.6v.9H2.9v-.9h.6l1-1.2-1-1.2h-.6z" fill="#fff"/></svg></div>
<div class="nm" style="left:93.12px;top:261.90px;width:160.00px;height:9.00px;">盛土工 <span class="p">[</span>購入土<span class="p">]</span></div>
<div class="num" style="left:210.20px;top:262.00px;width:58.20px;height:9.00px;">2,156,897</div>
<div class="num" style="left:272.20px;top:262.00px;width:59.60px;height:9.00px;">0</div>
<div class="num" style="left:335.60px;top:262.00px;width:59.70px;height:9.00px;">1,103,633</div>
<div class="num" style="left:399.10px;top:262.00px;width:59.60px;height:9.00px;">2,156,897</div>
<div class="num" style="left:462.50px;top:262.00px;width:59.60px;height:9.00px;">1,103,633</div>
<div class="num" style="left:525.90px;top:262.00px;width:59.70px;height:9.00px;">1.0000</div>
<div class="num" style="left:589.40px;top:262.00px;width:59.70px;height:9.00px;">0.5117</div>
<div class="num" style="left:652.90px;top:262.00px;width:59.70px;height:9.00px;">0.4931</div>
<div class="num" style="left:716.40px;top:262.00px;width:59.80px;height:9.00px;">51.2%</div>
<div style="left:782.00px;top:256.20px;width:30.72px;height:16.60px;background:#5c8ffa;border:0.6px solid #86aafc;"></div>
<div style="left:4.20px;top:273.60px;width:38.40px;height:19.00px;background:#fff;"></div>
<div style="left:42.60px;top:273.60px;width:790.20px;height:19.00px;background:#fff;"></div>
<div style="left:589.40px;top:273.60px;width:63.50px;height:19.00px;background:#ffff9c;"></div>
<div style="left:716.40px;top:273.60px;width:63.60px;height:19.00px;background:#ffff9c;"></div>
<div style="left:6.60px;top:276.70px;width:13.20px;height:12.80px;background:linear-gradient(90deg,#f57c00 0,#f57c00 42%,#fff 42%);border:0.9px solid #555;"></div>
<div class="rn" style="left:11.00px;top:280.30px;width:18.60px;height:8.00px;">9</div>
<div style="left:31.50px;top:279.10px;width:9.40px;height:9.80px;"><svg width="9.4" height="9.8" viewBox="0 0 9.4 9.8" style="left:0;top:0"><path d="M.5 2A1.5 1.5 0 0 1 2 .5h3.9l3 2.7v4.6a1.5 1.5 0 0 1-1.5 1.5H2A1.5 1.5 0 0 1 .5 7.8z" fill="#f6f6f6" stroke="#909090" stroke-width=".8"/><rect x="2.9" y="3.4" width="3.9" height="3.9" fill="#27b566"/></svg></div>
<div class="nm" style="left:105.15px;top:280.90px;width:160.00px;height:9.00px;">路体<span class="p">(</span>築堤<span class="p">)</span>盛土</div>
<div class="num" style="left:210.20px;top:281.00px;width:58.20px;height:9.00px;">752,545</div>
<div class="num" style="left:272.20px;top:281.00px;width:59.60px;height:9.00px;">0</div>
<div class="num" style="left:335.60px;top:281.00px;width:59.70px;height:9.00px;">752,545</div>
<div class="num" style="left:399.10px;top:281.00px;width:59.60px;height:9.00px;">752,545</div>
<div class="num" style="left:462.50px;top:281.00px;width:59.60px;height:9.00px;">752,545</div>
<div class="num" style="left:525.90px;top:281.00px;width:59.70px;height:9.00px;">360.0000</div>
<div class="num" style="left:589.40px;top:281.00px;width:59.70px;height:9.00px;">360.0000</div>
<div class="num" style="left:652.90px;top:281.00px;width:59.70px;height:9.00px;">0.0000</div>
<div style="left:4.20px;top:292.60px;width:38.40px;height:19.00px;background:#fff;"></div>
<div style="left:42.60px;top:292.60px;width:790.20px;height:19.00px;background:#fff;"></div>
<div style="left:589.40px;top:292.60px;width:63.50px;height:19.00px;background:#ffff9c;"></div>
<div style="left:716.40px;top:292.60px;width:63.60px;height:19.00px;background:#ffff9c;"></div>
<div style="left:6.60px;top:295.70px;width:13.20px;height:12.80px;background:linear-gradient(90deg,#f57c00 0,#f57c00 42%,#fff 42%);border:0.9px solid #555;"></div>
<div class="rn" style="left:11.00px;top:299.30px;width:18.60px;height:8.00px;">10</div>
<div style="left:31.50px;top:298.10px;width:9.40px;height:9.80px;"><svg width="9.4" height="9.8" viewBox="0 0 9.4 9.8" style="left:0;top:0"><path d="M.5 2A1.5 1.5 0 0 1 2 .5h3.9l3 2.7v4.6a1.5 1.5 0 0 1-1.5 1.5H2A1.5 1.5 0 0 1 .5 7.8z" fill="#f6f6f6" stroke="#909090" stroke-width=".8"/><rect x="2.9" y="3.4" width="3.9" height="3.9" fill="#27b566"/></svg></div>
<div class="nm" style="left:105.15px;top:299.90px;width:160.00px;height:9.00px;">土砂等運搬</div>
<div class="num" style="left:210.20px;top:300.00px;width:58.20px;height:9.00px;">1,404,352</div>
<div class="num" style="left:272.20px;top:300.00px;width:59.60px;height:9.00px;">0</div>
<div class="num" style="left:335.60px;top:300.00px;width:59.70px;height:9.00px;">351,088</div>
<div class="num" style="left:399.10px;top:300.00px;width:59.60px;height:9.00px;">1,404,352</div>
<div class="num" style="left:462.50px;top:300.00px;width:59.60px;height:9.00px;">351,088</div>
<div class="num" style="left:525.90px;top:300.00px;width:59.70px;height:9.00px;">360.0000</div>
<div class="num" style="left:589.40px;top:300.00px;width:59.70px;height:9.00px;">90.0000</div>
<div class="num" style="left:652.90px;top:300.00px;width:59.70px;height:9.00px;">270.0000</div>
<div style="left:4.20px;top:311.60px;width:38.40px;height:19.00px;background:#fff;"></div>
<div style="left:42.60px;top:311.60px;width:790.20px;height:19.00px;background:linear-gradient(180deg,#fffff2,#fffdd4);"></div>
<div style="left:589.40px;top:311.60px;width:63.50px;height:19.00px;background:#ffff9c;"></div>
<div style="left:716.40px;top:311.60px;width:63.60px;height:19.00px;background:#ffff9c;"></div>
<div class="rn" style="left:11.00px;top:318.30px;width:18.60px;height:8.00px;">11</div>
<div style="left:31.60px;top:317.00px;width:9.20px;height:9.50px;"><svg width="9.2" height="9.5" viewBox="0 0 9.2 9.5" style="left:0;top:0"><path d="M.9 .2h2.6l.9 1.3h3.9a.8.8 0 0 1 .8.8v6.1a.8.8 0 0 1-.8.8H.9a.8.8 0 0 1-.8-.8V1a.8.8 0 0 1 .8-.8z" fill="#f5a520"/><path d="M2.9 3.5h3.6v.9H5.9L4.9 5.6l1 1.2h.6v.9H2.9v-.9h.6l1-1.2-1-1.2h-.6z" fill="#fff"/></svg></div>
<div class="nm" style="left:93.12px;top:318.90px;width:160.00px;height:9.00px;">法面整形工</div>
<div class="num" style="left:210.20px;top:319.00px;width:58.20px;height:9.00px;">461,380</div>
<div class="num" style="left:272.20px;top:319.00px;width:59.60px;height:9.00px;">0</div>
<div class="num" style="left:335.60px;top:319.00px;width:59.70px;height:9.00px;">253,759</div>
<div class="num" style="left:399.10px;top:319.00px;width:59.60px;height:9.00px;">461,380</div>
<div class="num" style="left:462.50px;top:319.00px;width:59.60px;height:9.00px;">253,759</div>
<div class="num" style="left:525.90px;top:319.00px;width:59.70px;height:9.00px;">1.0000</div>
<div class="num" style="left:589.40px;top:319.00px;width:59.70px;height:9.00px;">0.5500</div>
<div class="num" style="left:652.90px;top:319.00px;width:59.70px;height:9.00px;">0.4500</div>
<div class="num" style="left:716.40px;top:319.00px;width:59.80px;height:9.00px;">55.0%</div>
<div style="left:782.00px;top:313.20px;width:33.00px;height:16.60px;background:#5c8ffa;border:0.6px solid #86aafc;"></div>
<div style="left:4.20px;top:330.60px;width:38.40px;height:19.00px;background:#fff;"></div>
<div style="left:42.60px;top:330.60px;width:790.20px;height:19.00px;background:#fff;"></div>
<div style="left:589.40px;top:330.60px;width:63.50px;height:19.00px;background:#ffff9c;"></div>
<div style="left:716.40px;top:330.60px;width:63.60px;height:19.00px;background:#ffff9c;"></div>
<div style="left:6.60px;top:333.70px;width:13.20px;height:12.80px;background:linear-gradient(90deg,#f57c00 0,#f57c00 42%,#fff 42%);border:0.9px solid #555;"></div>
<div class="rn" style="left:11.00px;top:337.30px;width:18.60px;height:8.00px;">12</div>
<div style="left:31.50px;top:336.10px;width:9.40px;height:9.80px;"><svg width="9.4" height="9.8" viewBox="0 0 9.4 9.8" style="left:0;top:0"><path d="M.5 2A1.5 1.5 0 0 1 2 .5h3.9l3 2.7v4.6a1.5 1.5 0 0 1-1.5 1.5H2A1.5 1.5 0 0 1 .5 7.8z" fill="#f6f6f6" stroke="#909090" stroke-width=".8"/><rect x="2.9" y="3.4" width="3.9" height="3.9" fill="#27b566"/></svg></div>
<div class="nm" style="left:105.15px;top:337.90px;width:160.00px;height:9.00px;">法面整形<span class="p">(</span>盛土部<span class="p">)</span></div>
<div class="num" style="left:210.20px;top:338.00px;width:58.20px;height:9.00px;">461,380</div>
<div class="num" style="left:272.20px;top:338.00px;width:59.60px;height:9.00px;">0</div>
<div class="num" style="left:335.60px;top:338.00px;width:59.70px;height:9.00px;">253,759</div>
<div class="num" style="left:399.10px;top:338.00px;width:59.60px;height:9.00px;">461,380</div>
<div class="num" style="left:462.50px;top:338.00px;width:59.60px;height:9.00px;">253,759</div>
<div class="num" style="left:525.90px;top:338.00px;width:59.70px;height:9.00px;">1,200.0000</div>
<div class="num" style="left:589.40px;top:338.00px;width:59.70px;height:9.00px;">660.0000</div>
<div class="num" style="left:652.90px;top:338.00px;width:59.70px;height:9.00px;">540.0000</div>
<div style="left:4.20px;top:349.60px;width:38.40px;height:19.00px;background:#fff;"></div>
<div style="left:42.60px;top:349.60px;width:790.20px;height:19.00px;background:linear-gradient(180deg,#fffff2,#fffdd4);"></div>
<div style="left:589.40px;top:349.60px;width:63.50px;height:19.00px;background:#ffff9c;"></div>
<div style="left:716.40px;top:349.60px;width:63.60px;height:19.00px;background:#ffff9c;"></div>
<div class="rn" style="left:11.00px;top:356.30px;width:18.60px;height:8.00px;">13</div>
<div style="left:31.60px;top:355.00px;width:9.20px;height:9.50px;"><svg width="9.2" height="9.5" viewBox="0 0 9.2 9.5" style="left:0;top:0"><path d="M.9 .2h2.6l.9 1.3h3.9a.8.8 0 0 1 .8.8v6.1a.8.8 0 0 1-.8.8H.9a.8.8 0 0 1-.8-.8V1a.8.8 0 0 1 .8-.8z" fill="#f5a520"/><path d="M2.9 3.5h3.6v.9H5.9L4.9 5.6l1 1.2h.6v.9H2.9v-.9h.6l1-1.2-1-1.2h-.6z" fill="#fff"/></svg></div>
<div class="nm" style="left:81.09px;top:356.90px;width:160.00px;height:9.00px;">法面工</div>
<div class="num" style="left:210.20px;top:357.00px;width:58.20px;height:9.00px;">1,170,000</div>
<div class="num" style="left:272.20px;top:357.00px;width:59.60px;height:9.00px;">0</div>
<div class="num" style="left:335.60px;top:357.00px;width:59.70px;height:9.00px;">585,000</div>
<div class="num" style="left:399.10px;top:357.00px;width:59.60px;height:9.00px;">1,170,000</div>
<div class="num" style="left:462.50px;top:357.00px;width:59.60px;height:9.00px;">585,000</div>
<div class="num" style="left:525.90px;top:357.00px;width:59.70px;height:9.00px;">1.0000</div>
<div class="num" style="left:589.40px;top:357.00px;width:59.70px;height:9.00px;">0.5000</div>
<div class="num" style="left:652.90px;top:357.00px;width:59.70px;height:9.00px;">0.5000</div>
<div class="num" style="left:716.40px;top:357.00px;width:59.80px;height:9.00px;">50.0%</div>
<div style="left:782.00px;top:351.20px;width:30.00px;height:16.60px;background:#5c8ffa;border:0.6px solid #86aafc;"></div>
<div style="left:4.20px;top:368.60px;width:38.40px;height:19.00px;background:#fff;"></div>
<div style="left:42.60px;top:368.60px;width:790.20px;height:19.00px;background:linear-gradient(180deg,#fffff2,#fffdd4);"></div>
<div style="left:589.40px;top:368.60px;width:63.50px;height:19.00px;background:#ffff9c;"></div>
<div style="left:716.40px;top:368.60px;width:63.60px;height:19.00px;background:#ffff9c;"></div>
<div class="rn" style="left:11.00px;top:375.30px;width:18.60px;height:8.00px;">14</div>
<div style="left:31.60px;top:374.00px;width:9.20px;height:9.50px;"><svg width="9.2" height="9.5" viewBox="0 0 9.2 9.5" style="left:0;top:0"><path d="M.9 .2h2.6l.9 1.3h3.9a.8.8 0 0 1 .8.8v6.1a.8.8 0 0 1-.8.8H.9a.8.8 0 0 1-.8-.8V1a.8.8 0 0 1 .8-.8z" fill="#f5a520"/><path d="M2.9 3.5h3.6v.9H5.9L4.9 5.6l1 1.2h.6v.9H2.9v-.9h.6l1-1.2-1-1.2h-.6z" fill="#fff"/></svg></div>
<div class="nm" style="left:93.12px;top:375.90px;width:160.00px;height:9.00px;">植生工</div>
<div class="num" style="left:210.20px;top:376.00px;width:58.20px;height:9.00px;">1,170,000</div>
<div class="num" style="left:272.20px;top:376.00px;width:59.60px;height:9.00px;">0</div>
<div class="num" style="left:335.60px;top:376.00px;width:59.70px;height:9.00px;">585,000</div>
<div class="num" style="left:399.10px;top:376.00px;width:59.60px;height:9.00px;">1,170,000</div>
<div class="num" style="left:462.50px;top:376.00px;width:59.60px;height:9.00px;">585,000</div>
<div class="num" style="left:525.90px;top:376.00px;width:59.70px;height:9.00px;">1.0000</div>
<div class="num" style="left:589.40px;top:376.00px;width:59.70px;height:9.00px;">0.5000</div>
<div class="num" style="left:652.90px;top:376.00px;width:59.70px;height:9.00px;">0.5000</div>
<div class="num" style="left:716.40px;top:376.00px;width:59.80px;height:9.00px;">50.0%</div>
<div style="left:782.00px;top:370.20px;width:30.00px;height:16.60px;background:#5c8ffa;border:0.6px solid #86aafc;"></div>
<div style="left:4.20px;top:387.60px;width:38.40px;height:19.00px;background:#fff;"></div>
<div style="left:42.60px;top:387.60px;width:790.20px;height:19.00px;background:#fff;"></div>
<div style="left:589.40px;top:387.60px;width:63.50px;height:19.00px;background:#ffff9c;"></div>
<div style="left:716.40px;top:387.60px;width:63.60px;height:19.00px;background:#ffff9c;"></div>
<div style="left:6.60px;top:390.70px;width:13.20px;height:12.80px;background:linear-gradient(90deg,#f57c00 0,#f57c00 42%,#fff 42%);border:0.9px solid #555;"></div>
<div class="rn" style="left:11.00px;top:394.30px;width:18.60px;height:8.00px;">15</div>
<div style="left:31.50px;top:393.10px;width:9.40px;height:9.80px;"><svg width="9.4" height="9.8" viewBox="0 0 9.4 9.8" style="left:0;top:0"><path d="M.5 2A1.5 1.5 0 0 1 2 .5h3.9l3 2.7v4.6a1.5 1.5 0 0 1-1.5 1.5H2A1.5 1.5 0 0 1 .5 7.8z" fill="#f6f6f6" stroke="#909090" stroke-width=".8"/><rect x="2.9" y="3.4" width="3.9" height="3.9" fill="#27b566"/></svg></div>
<div class="nm" style="left:105.15px;top:394.90px;width:160.00px;height:9.00px;">張芝</div>
<div class="num" style="left:210.20px;top:395.00px;width:58.20px;height:9.00px;">1,170,000</div>
<div class="num" style="left:272.20px;top:395.00px;width:59.60px;height:9.00px;">0</div>
<div class="num" style="left:335.60px;top:395.00px;width:59.70px;height:9.00px;">585,000</div>
<div class="num" style="left:399.10px;top:395.00px;width:59.60px;height:9.00px;">1,170,000</div>
<div class="num" style="left:462.50px;top:395.00px;width:59.60px;height:9.00px;">585,000</div>
<div class="num" style="left:525.90px;top:395.00px;width:59.70px;height:9.00px;">1,500.0000</div>
<div class="num" style="left:589.40px;top:395.00px;width:59.70px;height:9.00px;">750.0000</div>
<div class="num" style="left:652.90px;top:395.00px;width:59.70px;height:9.00px;">750.0000</div>
<div style="left:4.20px;top:406.60px;width:38.40px;height:19.00px;background:#fff;"></div>
<div style="left:42.60px;top:406.60px;width:790.20px;height:19.00px;background:linear-gradient(180deg,#fffff2,#fffdd4);"></div>
<div style="left:589.40px;top:406.60px;width:63.50px;height:19.00px;background:#ffff9c;"></div>
<div style="left:716.40px;top:406.60px;width:63.60px;height:19.00px;background:#ffff9c;"></div>
<div class="rn" style="left:11.00px;top:413.30px;width:18.60px;height:8.00px;">16</div>
<div style="left:31.60px;top:412.00px;width:9.20px;height:9.50px;"><svg width="9.2" height="9.5" viewBox="0 0 9.2 9.5" style="left:0;top:0"><path d="M.9 .2h2.6l.9 1.3h3.9a.8.8 0 0 1 .8.8v6.1a.8.8 0 0 1-.8.8H.9a.8.8 0 0 1-.8-.8V1a.8.8 0 0 1 .8-.8z" fill="#f5a520"/><path d="M2.9 3.5h3.6v.9H5.9L4.9 5.6l1 1.2h.6v.9H2.9v-.9h.6l1-1.2-1-1.2h-.6z" fill="#fff"/></svg></div>
<div class="nm" style="left:81.09px;top:413.90px;width:160.00px;height:9.00px;">付帯道路工</div>
<div class="num" style="left:210.20px;top:414.00px;width:58.20px;height:9.00px;">7,487,270</div>
<div class="num" style="left:272.20px;top:414.00px;width:59.60px;height:9.00px;">0</div>
<div class="num" style="left:335.60px;top:414.00px;width:59.70px;height:9.00px;">1,333,950</div>
<div class="num" style="left:399.10px;top:414.00px;width:59.60px;height:9.00px;">7,487,270</div>
<div class="num" style="left:462.50px;top:414.00px;width:59.60px;height:9.00px;">1,333,950</div>
<div class="num" style="left:525.90px;top:414.00px;width:59.70px;height:9.00px;">1.0000</div>
<div class="num" style="left:589.40px;top:414.00px;width:59.70px;height:9.00px;">0.1782</div>
<div class="num" style="left:652.90px;top:414.00px;width:59.70px;height:9.00px;">0.8218</div>
<div class="num" style="left:716.40px;top:414.00px;width:59.80px;height:9.00px;">17.8%</div>
<div style="left:782.00px;top:408.20px;width:10.68px;height:16.60px;background:#5c8ffa;border:0.6px solid #86aafc;"></div>
<div style="left:4.20px;top:425.60px;width:38.40px;height:19.00px;background:#fff;"></div>
<div style="left:42.60px;top:425.60px;width:790.20px;height:19.00px;background:linear-gradient(180deg,#fffff2,#fffdd4);"></div>
<div style="left:589.40px;top:425.60px;width:63.50px;height:19.00px;background:#ffff9c;"></div>
<div style="left:716.40px;top:425.60px;width:63.60px;height:19.00px;background:#ffff9c;"></div>
<div class="rn" style="left:11.00px;top:432.30px;width:18.60px;height:8.00px;">17</div>
<div style="left:31.60px;top:431.00px;width:9.20px;height:9.50px;"><svg width="9.2" height="9.5" viewBox="0 0 9.2 9.5" style="left:0;top:0"><path d="M.9 .2h2.6l.9 1.3h3.9a.8.8 0 0 1 .8.8v6.1a.8.8 0 0 1-.8.8H.9a.8.8 0 0 1-.8-.8V1a.8.8 0 0 1 .8-.8z" fill="#f5a520"/><path d="M2.9 3.5h3.6v.9H5.9L4.9 5.6l1 1.2h.6v.9H2.9v-.9h.6l1-1.2-1-1.2h-.6z" fill="#fff"/></svg></div>
<div class="nm" style="left:93.12px;top:432.90px;width:160.00px;height:9.00px;">作業土工</div>
<div class="num" style="left:210.20px;top:433.00px;width:58.20px;height:9.00px;">113,750</div>
<div class="num" style="left:272.20px;top:433.00px;width:59.60px;height:9.00px;">0</div>
<div class="num" style="left:335.60px;top:433.00px;width:59.70px;height:9.00px;">113,750</div>
<div class="num" style="left:399.10px;top:433.00px;width:59.60px;height:9.00px;">113,750</div>
<div class="num" style="left:462.50px;top:433.00px;width:59.60px;height:9.00px;">113,750</div>
<div class="num" style="left:525.90px;top:433.00px;width:59.70px;height:9.00px;">1.0000</div>
<div class="num" style="left:589.40px;top:433.00px;width:59.70px;height:9.00px;">1.0000</div>
<div class="num" style="left:652.90px;top:433.00px;width:59.70px;height:9.00px;">0.0000</div>
<div class="num" style="left:716.40px;top:433.00px;width:59.80px;height:9.00px;">100.0%</div>
<div style="left:782.00px;top:427.20px;width:60.00px;height:16.60px;background:#5c8ffa;border:0.6px solid #86aafc;"></div>
<div style="left:4.20px;top:444.60px;width:38.40px;height:19.00px;background:#fff;"></div>
<div style="left:42.60px;top:444.60px;width:790.20px;height:19.00px;background:#fff;"></div>
<div style="left:589.40px;top:444.60px;width:63.50px;height:19.00px;background:#ffff9c;"></div>
<div style="left:716.40px;top:444.60px;width:63.60px;height:19.00px;background:#ffff9c;"></div>
<div style="left:6.60px;top:447.70px;width:13.20px;height:12.80px;background:linear-gradient(90deg,#f57c00 0,#f57c00 42%,#fff 42%);border:0.9px solid #555;"></div>
<div class="rn" style="left:11.00px;top:451.30px;width:18.60px;height:8.00px;">18</div>
<div style="left:31.50px;top:450.10px;width:9.40px;height:9.80px;"><svg width="9.4" height="9.8" viewBox="0 0 9.4 9.8" style="left:0;top:0"><path d="M.5 2A1.5 1.5 0 0 1 2 .5h3.9l3 2.7v4.6a1.5 1.5 0 0 1-1.5 1.5H2A1.5 1.5 0 0 1 .5 7.8z" fill="#f6f6f6" stroke="#909090" stroke-width=".8"/><rect x="2.9" y="3.4" width="3.9" height="3.9" fill="#27b566"/></svg></div>
<div class="nm" style="left:105.15px;top:451.90px;width:160.00px;height:9.00px;">床掘り</div>
<div class="num" style="left:210.20px;top:452.00px;width:58.20px;height:9.00px;">113,750</div>
<div class="num" style="left:272.20px;top:452.00px;width:59.60px;height:9.00px;">0</div>
<div class="num" style="left:335.60px;top:452.00px;width:59.70px;height:9.00px;">113,750</div>
<div class="num" style="left:399.10px;top:452.00px;width:59.60px;height:9.00px;">113,750</div>
<div class="num" style="left:462.50px;top:452.00px;width:59.60px;height:9.00px;">113,750</div>
<div class="num" style="left:525.90px;top:452.00px;width:59.70px;height:9.00px;">350.0000</div>
<div class="num" style="left:589.40px;top:452.00px;width:59.70px;height:9.00px;">350.0000</div>
<div class="num" style="left:652.90px;top:452.00px;width:59.70px;height:9.00px;">0.0000</div>
<div style="left:4.20px;top:463.60px;width:38.40px;height:19.00px;background:#fff;"></div>
<div style="left:42.60px;top:463.60px;width:790.20px;height:19.00px;background:linear-gradient(180deg,#fffff2,#fffdd4);"></div>
<div style="left:589.40px;top:463.60px;width:63.50px;height:19.00px;background:#ffff9c;"></div>
<div style="left:716.40px;top:463.60px;width:63.60px;height:19.00px;background:#ffff9c;"></div>
<div class="rn" style="left:11.00px;top:470.30px;width:18.60px;height:8.00px;">19</div>
<div style="left:31.60px;top:469.00px;width:9.20px;height:9.50px;"><svg width="9.2" height="9.5" viewBox="0 0 9.2 9.5" style="left:0;top:0"><path d="M.9 .2h2.6l.9 1.3h3.9a.8.8 0 0 1 .8.8v6.1a.8.8 0 0 1-.8.8H.9a.8.8 0 0 1-.8-.8V1a.8.8 0 0 1 .8-.8z" fill="#f5a520"/><path d="M2.9 3.5h3.6v.9H5.9L4.9 5.6l1 1.2h.6v.9H2.9v-.9h.6l1-1.2-1-1.2h-.6z" fill="#fff"/></svg></div>
<div class="nm" style="left:93.12px;top:470.90px;width:160.00px;height:9.00px;">舗装準備工</div>
<div class="num" style="left:210.20px;top:471.00px;width:58.20px;height:9.00px;">200,200</div>
<div class="num" style="left:272.20px;top:471.00px;width:59.60px;height:9.00px;">0</div>
<div class="num" style="left:335.60px;top:471.00px;width:59.70px;height:9.00px;">200,200</div>
<div class="num" style="left:399.10px;top:471.00px;width:59.60px;height:9.00px;">200,200</div>
<div class="num" style="left:462.50px;top:471.00px;width:59.60px;height:9.00px;">200,200</div>
<div class="num" style="left:525.90px;top:471.00px;width:59.70px;height:9.00px;">1.0000</div>
<div class="num" style="left:589.40px;top:471.00px;width:59.70px;height:9.00px;">1.0000</div>
<div class="num" style="left:652.90px;top:471.00px;width:59.70px;height:9.00px;">0.0000</div>
<div class="num" style="left:716.40px;top:471.00px;width:59.80px;height:9.00px;">100.0%</div>
<div style="left:782.00px;top:465.20px;width:60.00px;height:16.60px;background:#5c8ffa;border:0.6px solid #86aafc;"></div>
<div style="left:4.20px;top:482.60px;width:38.40px;height:19.00px;background:#fff;"></div>
<div style="left:42.60px;top:482.60px;width:790.20px;height:19.00px;background:#fff;"></div>
<div style="left:589.40px;top:482.60px;width:63.50px;height:19.00px;background:#ffff9c;"></div>
<div style="left:716.40px;top:482.60px;width:63.60px;height:19.00px;background:#ffff9c;"></div>
<div style="left:6.60px;top:485.70px;width:13.20px;height:12.80px;background:linear-gradient(90deg,#f57c00 0,#f57c00 42%,#fff 42%);border:0.9px solid #555;"></div>
<div class="rn" style="left:11.00px;top:489.30px;width:18.60px;height:8.00px;">20</div>
<div style="left:31.50px;top:488.10px;width:9.40px;height:9.80px;"><svg width="9.4" height="9.8" viewBox="0 0 9.4 9.8" style="left:0;top:0"><path d="M.5 2A1.5 1.5 0 0 1 2 .5h3.9l3 2.7v4.6a1.5 1.5 0 0 1-1.5 1.5H2A1.5 1.5 0 0 1 .5 7.8z" fill="#f6f6f6" stroke="#909090" stroke-width=".8"/><rect x="2.9" y="3.4" width="3.9" height="3.9" fill="#27b566"/></svg></div>
<div class="nm" style="left:105.15px;top:489.90px;width:160.00px;height:9.00px;">不陸整正</div>
<div class="num" style="left:210.20px;top:490.00px;width:58.20px;height:9.00px;">200,200</div>
<div class="num" style="left:272.20px;top:490.00px;width:59.60px;height:9.00px;">0</div>
<div class="num" style="left:335.60px;top:490.00px;width:59.70px;height:9.00px;">200,200</div>
<div class="num" style="left:399.10px;top:490.00px;width:59.60px;height:9.00px;">200,200</div>
<div class="num" style="left:462.50px;top:490.00px;width:59.60px;height:9.00px;">200,200</div>
<div class="num" style="left:525.90px;top:490.00px;width:59.70px;height:9.00px;">1,540.0000</div>
<div class="num" style="left:589.40px;top:490.00px;width:59.70px;height:9.00px;">1,540.0000</div>
<div class="num" style="left:652.90px;top:490.00px;width:59.70px;height:9.00px;">0.0000</div>
<div style="left:4.20px;top:501.60px;width:38.40px;height:19.00px;background:#fff;"></div>
<div style="left:42.60px;top:501.60px;width:790.20px;height:19.00px;background:linear-gradient(180deg,#fffff2,#fffdd4);"></div>
<div style="left:589.40px;top:501.60px;width:63.50px;height:19.00px;background:#ffff9c;"></div>
<div style="left:716.40px;top:501.60px;width:63.60px;height:19.00px;background:#ffff9c;"></div>
<div class="rn" style="left:11.00px;top:508.30px;width:18.60px;height:8.00px;">21</div>
<div style="left:31.60px;top:507.00px;width:9.20px;height:9.50px;"><svg width="9.2" height="9.5" viewBox="0 0 9.2 9.5" style="left:0;top:0"><path d="M.9 .2h2.6l.9 1.3h3.9a.8.8 0 0 1 .8.8v6.1a.8.8 0 0 1-.8.8H.9a.8.8 0 0 1-.8-.8V1a.8.8 0 0 1 .8-.8z" fill="#f5a520"/><path d="M2.9 3.5h3.6v.9H5.9L4.9 5.6l1 1.2h.6v.9H2.9v-.9h.6l1-1.2-1-1.2h-.6z" fill="#fff"/></svg></div>
<div class="nm" style="left:93.12px;top:508.90px;width:160.00px;height:9.00px;">ｱｽﾌｧﾙﾄ舗装工</div>
<div class="num" style="left:210.20px;top:509.00px;width:58.20px;height:9.00px;">7,173,320</div>
<div class="num" style="left:272.20px;top:509.00px;width:59.60px;height:9.00px;">0</div>
<div class="num" style="left:335.60px;top:509.00px;width:59.70px;height:9.00px;">1,020,000</div>
<div class="num" style="left:399.10px;top:509.00px;width:59.60px;height:9.00px;">7,173,320</div>
<div class="num" style="left:462.50px;top:509.00px;width:59.60px;height:9.00px;">1,020,000</div>
<div class="num" style="left:525.90px;top:509.00px;width:59.70px;height:9.00px;">1.0000</div>
<div class="num" style="left:589.40px;top:509.00px;width:59.70px;height:9.00px;">0.1422</div>
<div class="num" style="left:652.90px;top:509.00px;width:59.70px;height:9.00px;">0.8578</div>
<div class="num" style="left:716.40px;top:509.00px;width:59.80px;height:9.00px;">14.2%</div>
<div style="left:782.00px;top:503.20px;width:8.52px;height:16.60px;background:#5c8ffa;border:0.6px solid #86aafc;"></div>
<div style="left:4.20px;top:520.60px;width:38.40px;height:19.00px;background:#fff;"></div>
<div style="left:42.60px;top:520.60px;width:790.20px;height:19.00px;background:#bcdcf6;"></div>
<div style="left:589.40px;top:520.60px;width:63.50px;height:19.00px;background:#ffff9c;"></div>
<div style="left:716.40px;top:520.60px;width:63.60px;height:19.00px;background:#ffff9c;"></div>
<div style="left:780.00px;top:520.60px;width:52.80px;height:19.00px;background:#ffff9c;"></div>
<div style="left:6.60px;top:523.70px;width:13.20px;height:12.80px;background:linear-gradient(90deg,#f57c00 0,#f57c00 42%,#fff 42%);border:0.9px solid #555;"></div>
<div class="rn" style="left:11.00px;top:527.30px;width:18.60px;height:8.00px;">22</div>
<div style="left:31.50px;top:526.10px;width:9.40px;height:9.80px;"><svg width="9.4" height="9.8" viewBox="0 0 9.4 9.8" style="left:0;top:0"><path d="M.5 2A1.5 1.5 0 0 1 2 .5h3.9l3 2.7v4.6a1.5 1.5 0 0 1-1.5 1.5H2A1.5 1.5 0 0 1 .5 7.8z" fill="#f6f6f6" stroke="#909090" stroke-width=".8"/><rect x="2.9" y="3.4" width="3.9" height="3.9" fill="#27b566"/></svg></div>
<div class="nm" style="left:105.15px;top:527.90px;width:160.00px;height:9.00px;">下層路盤<span class="p">(</span>車道･路肩部<span class="p">)</span></div>
<div class="num" style="left:210.20px;top:528.00px;width:58.20px;height:9.00px;">1,570,800</div>
<div class="num" style="left:272.20px;top:528.00px;width:59.60px;height:9.00px;">0</div>
<div class="num" style="left:335.60px;top:528.00px;width:59.70px;height:9.00px;">1,020,000</div>
<div class="num" style="left:399.10px;top:528.00px;width:59.60px;height:9.00px;">1,570,800</div>
<div class="num" style="left:462.50px;top:528.00px;width:59.60px;height:9.00px;">1,020,000</div>
<div class="num" style="left:525.90px;top:528.00px;width:59.70px;height:9.00px;">1,540.0000</div>
<div class="num" style="left:589.40px;top:528.00px;width:59.70px;height:9.00px;">1,000.0000</div>
<div class="num" style="left:652.90px;top:528.00px;width:59.70px;height:9.00px;">540.0000</div>
<div style="left:55.00px;top:140.60px;width:0.80px;height:19.00px;background:repeating-linear-gradient(180deg,#62b0b6 0,#62b0b6 1px,transparent 1px,transparent 2px);"></div>
<div style="left:55.00px;top:159.60px;width:0.80px;height:19.00px;background:repeating-linear-gradient(180deg,#62b0b6 0,#62b0b6 1px,transparent 1px,transparent 2px);"></div>
<div style="left:67.03px;top:159.60px;width:0.80px;height:19.00px;background:repeating-linear-gradient(180deg,#62b0b6 0,#62b0b6 1px,transparent 1px,transparent 2px);"></div>
<div style="left:55.00px;top:178.60px;width:0.80px;height:19.00px;background:repeating-linear-gradient(180deg,#62b0b6 0,#62b0b6 1px,transparent 1px,transparent 2px);"></div>
<div style="left:67.03px;top:178.60px;width:0.80px;height:19.00px;background:repeating-linear-gradient(180deg,#62b0b6 0,#62b0b6 1px,transparent 1px,transparent 2px);"></div>
<div style="left:79.06px;top:178.60px;width:0.80px;height:19.00px;background:repeating-linear-gradient(180deg,#62b0b6 0,#62b0b6 1px,transparent 1px,transparent 2px);"></div>
<div style="left:55.00px;top:197.60px;width:0.80px;height:19.00px;background:repeating-linear-gradient(180deg,#62b0b6 0,#62b0b6 1px,transparent 1px,transparent 2px);"></div>
<div style="left:67.03px;top:197.60px;width:0.80px;height:19.00px;background:repeating-linear-gradient(180deg,#62b0b6 0,#62b0b6 1px,transparent 1px,transparent 2px);"></div>
<div style="left:79.06px;top:197.60px;width:0.80px;height:19.00px;background:repeating-linear-gradient(180deg,#62b0b6 0,#62b0b6 1px,transparent 1px,transparent 2px);"></div>
<div style="left:91.09px;top:197.60px;width:0.80px;height:19.00px;background:repeating-linear-gradient(180deg,#62b0b6 0,#62b0b6 1px,transparent 1px,transparent 2px);"></div>
<div style="left:55.00px;top:216.60px;width:0.80px;height:19.00px;background:repeating-linear-gradient(180deg,#62b0b6 0,#62b0b6 1px,transparent 1px,transparent 2px);"></div>
<div style="left:67.03px;top:216.60px;width:0.80px;height:19.00px;background:repeating-linear-gradient(180deg,#62b0b6 0,#62b0b6 1px,transparent 1px,transparent 2px);"></div>
<div style="left:79.06px;top:216.60px;width:0.80px;height:19.00px;background:repeating-linear-gradient(180deg,#62b0b6 0,#62b0b6 1px,transparent 1px,transparent 2px);"></div>
<div style="left:91.09px;top:216.60px;width:0.80px;height:19.00px;background:repeating-linear-gradient(180deg,#62b0b6 0,#62b0b6 1px,transparent 1px,transparent 2px);"></div>
<div style="left:103.12px;top:216.60px;width:0.80px;height:19.00px;background:repeating-linear-gradient(180deg,#62b0b6 0,#62b0b6 1px,transparent 1px,transparent 2px);"></div>
<div style="left:55.00px;top:235.60px;width:0.80px;height:19.00px;background:repeating-linear-gradient(180deg,#62b0b6 0,#62b0b6 1px,transparent 1px,transparent 2px);"></div>
<div style="left:67.03px;top:235.60px;width:0.80px;height:19.00px;background:repeating-linear-gradient(180deg,#62b0b6 0,#62b0b6 1px,transparent 1px,transparent 2px);"></div>
<div style="left:79.06px;top:235.60px;width:0.80px;height:19.00px;background:repeating-linear-gradient(180deg,#62b0b6 0,#62b0b6 1px,transparent 1px,transparent 2px);"></div>
<div style="left:91.09px;top:235.60px;width:0.80px;height:19.00px;background:repeating-linear-gradient(180deg,#62b0b6 0,#62b0b6 1px,transparent 1px,transparent 2px);"></div>
<div style="left:103.12px;top:235.60px;width:0.80px;height:19.00px;background:repeating-linear-gradient(180deg,#62b0b6 0,#62b0b6 1px,transparent 1px,transparent 2px);"></div>
<div style="left:55.00px;top:254.60px;width:0.80px;height:19.00px;background:repeating-linear-gradient(180deg,#62b0b6 0,#62b0b6 1px,transparent 1px,transparent 2px);"></div>
<div style="left:67.03px;top:254.60px;width:0.80px;height:19.00px;background:repeating-linear-gradient(180deg,#62b0b6 0,#62b0b6 1px,transparent 1px,transparent 2px);"></div>
<div style="left:79.06px;top:254.60px;width:0.80px;height:19.00px;background:repeating-linear-gradient(180deg,#62b0b6 0,#62b0b6 1px,transparent 1px,transparent 2px);"></div>
<div style="left:91.09px;top:254.60px;width:0.80px;height:19.00px;background:repeating-linear-gradient(180deg,#62b0b6 0,#62b0b6 1px,transparent 1px,transparent 2px);"></div>
<div style="left:55.00px;top:273.60px;width:0.80px;height:19.00px;background:repeating-linear-gradient(180deg,#62b0b6 0,#62b0b6 1px,transparent 1px,transparent 2px);"></div>
<div style="left:67.03px;top:273.60px;width:0.80px;height:19.00px;background:repeating-linear-gradient(180deg,#62b0b6 0,#62b0b6 1px,transparent 1px,transparent 2px);"></div>
<div style="left:79.06px;top:273.60px;width:0.80px;height:19.00px;background:repeating-linear-gradient(180deg,#62b0b6 0,#62b0b6 1px,transparent 1px,transparent 2px);"></div>
<div style="left:91.09px;top:273.60px;width:0.80px;height:19.00px;background:repeating-linear-gradient(180deg,#62b0b6 0,#62b0b6 1px,transparent 1px,transparent 2px);"></div>
<div style="left:103.12px;top:273.60px;width:0.80px;height:19.00px;background:repeating-linear-gradient(180deg,#62b0b6 0,#62b0b6 1px,transparent 1px,transparent 2px);"></div>
<div style="left:55.00px;top:292.60px;width:0.80px;height:19.00px;background:repeating-linear-gradient(180deg,#62b0b6 0,#62b0b6 1px,transparent 1px,transparent 2px);"></div>
<div style="left:67.03px;top:292.60px;width:0.80px;height:19.00px;background:repeating-linear-gradient(180deg,#62b0b6 0,#62b0b6 1px,transparent 1px,transparent 2px);"></div>
<div style="left:79.06px;top:292.60px;width:0.80px;height:19.00px;background:repeating-linear-gradient(180deg,#62b0b6 0,#62b0b6 1px,transparent 1px,transparent 2px);"></div>
<div style="left:91.09px;top:292.60px;width:0.80px;height:19.00px;background:repeating-linear-gradient(180deg,#62b0b6 0,#62b0b6 1px,transparent 1px,transparent 2px);"></div>
<div style="left:103.12px;top:292.60px;width:0.80px;height:19.00px;background:repeating-linear-gradient(180deg,#62b0b6 0,#62b0b6 1px,transparent 1px,transparent 2px);"></div>
<div style="left:55.00px;top:311.60px;width:0.80px;height:19.00px;background:repeating-linear-gradient(180deg,#62b0b6 0,#62b0b6 1px,transparent 1px,transparent 2px);"></div>
<div style="left:67.03px;top:311.60px;width:0.80px;height:19.00px;background:repeating-linear-gradient(180deg,#62b0b6 0,#62b0b6 1px,transparent 1px,transparent 2px);"></div>
<div style="left:79.06px;top:311.60px;width:0.80px;height:19.00px;background:repeating-linear-gradient(180deg,#62b0b6 0,#62b0b6 1px,transparent 1px,transparent 2px);"></div>
<div style="left:91.09px;top:311.60px;width:0.80px;height:19.00px;background:repeating-linear-gradient(180deg,#62b0b6 0,#62b0b6 1px,transparent 1px,transparent 2px);"></div>
<div style="left:55.00px;top:330.60px;width:0.80px;height:19.00px;background:repeating-linear-gradient(180deg,#62b0b6 0,#62b0b6 1px,transparent 1px,transparent 2px);"></div>
<div style="left:67.03px;top:330.60px;width:0.80px;height:19.00px;background:repeating-linear-gradient(180deg,#62b0b6 0,#62b0b6 1px,transparent 1px,transparent 2px);"></div>
<div style="left:79.06px;top:330.60px;width:0.80px;height:19.00px;background:repeating-linear-gradient(180deg,#62b0b6 0,#62b0b6 1px,transparent 1px,transparent 2px);"></div>
<div style="left:91.09px;top:330.60px;width:0.80px;height:19.00px;background:repeating-linear-gradient(180deg,#62b0b6 0,#62b0b6 1px,transparent 1px,transparent 2px);"></div>
<div style="left:103.12px;top:330.60px;width:0.80px;height:19.00px;background:repeating-linear-gradient(180deg,#62b0b6 0,#62b0b6 1px,transparent 1px,transparent 2px);"></div>
<div style="left:55.00px;top:349.60px;width:0.80px;height:19.00px;background:repeating-linear-gradient(180deg,#62b0b6 0,#62b0b6 1px,transparent 1px,transparent 2px);"></div>
<div style="left:67.03px;top:349.60px;width:0.80px;height:19.00px;background:repeating-linear-gradient(180deg,#62b0b6 0,#62b0b6 1px,transparent 1px,transparent 2px);"></div>
<div style="left:79.06px;top:349.60px;width:0.80px;height:19.00px;background:repeating-linear-gradient(180deg,#62b0b6 0,#62b0b6 1px,transparent 1px,transparent 2px);"></div>
<div style="left:55.00px;top:368.60px;width:0.80px;height:19.00px;background:repeating-linear-gradient(180deg,#62b0b6 0,#62b0b6 1px,transparent 1px,transparent 2px);"></div>
<div style="left:67.03px;top:368.60px;width:0.80px;height:19.00px;background:repeating-linear-gradient(180deg,#62b0b6 0,#62b0b6 1px,transparent 1px,transparent 2px);"></div>
<div style="left:79.06px;top:368.60px;width:0.80px;height:19.00px;background:repeating-linear-gradient(180deg,#62b0b6 0,#62b0b6 1px,transparent 1px,transparent 2px);"></div>
<div style="left:91.09px;top:368.60px;width:0.80px;height:19.00px;background:repeating-linear-gradient(180deg,#62b0b6 0,#62b0b6 1px,transparent 1px,transparent 2px);"></div>
<div style="left:55.00px;top:387.60px;width:0.80px;height:19.00px;background:repeating-linear-gradient(180deg,#62b0b6 0,#62b0b6 1px,transparent 1px,transparent 2px);"></div>
<div style="left:67.03px;top:387.60px;width:0.80px;height:19.00px;background:repeating-linear-gradient(180deg,#62b0b6 0,#62b0b6 1px,transparent 1px,transparent 2px);"></div>
<div style="left:79.06px;top:387.60px;width:0.80px;height:19.00px;background:repeating-linear-gradient(180deg,#62b0b6 0,#62b0b6 1px,transparent 1px,transparent 2px);"></div>
<div style="left:91.09px;top:387.60px;width:0.80px;height:19.00px;background:repeating-linear-gradient(180deg,#62b0b6 0,#62b0b6 1px,transparent 1px,transparent 2px);"></div>
<div style="left:103.12px;top:387.60px;width:0.80px;height:19.00px;background:repeating-linear-gradient(180deg,#62b0b6 0,#62b0b6 1px,transparent 1px,transparent 2px);"></div>
<div style="left:55.00px;top:406.60px;width:0.80px;height:19.00px;background:repeating-linear-gradient(180deg,#62b0b6 0,#62b0b6 1px,transparent 1px,transparent 2px);"></div>
<div style="left:67.03px;top:406.60px;width:0.80px;height:19.00px;background:repeating-linear-gradient(180deg,#62b0b6 0,#62b0b6 1px,transparent 1px,transparent 2px);"></div>
<div style="left:79.06px;top:406.60px;width:0.80px;height:19.00px;background:repeating-linear-gradient(180deg,#62b0b6 0,#62b0b6 1px,transparent 1px,transparent 2px);"></div>
<div style="left:55.00px;top:425.60px;width:0.80px;height:19.00px;background:repeating-linear-gradient(180deg,#62b0b6 0,#62b0b6 1px,transparent 1px,transparent 2px);"></div>
<div style="left:67.03px;top:425.60px;width:0.80px;height:19.00px;background:repeating-linear-gradient(180deg,#62b0b6 0,#62b0b6 1px,transparent 1px,transparent 2px);"></div>
<div style="left:79.06px;top:425.60px;width:0.80px;height:19.00px;background:repeating-linear-gradient(180deg,#62b0b6 0,#62b0b6 1px,transparent 1px,transparent 2px);"></div>
<div style="left:91.09px;top:425.60px;width:0.80px;height:19.00px;background:repeating-linear-gradient(180deg,#62b0b6 0,#62b0b6 1px,transparent 1px,transparent 2px);"></div>
<div style="left:55.00px;top:444.60px;width:0.80px;height:19.00px;background:repeating-linear-gradient(180deg,#62b0b6 0,#62b0b6 1px,transparent 1px,transparent 2px);"></div>
<div style="left:67.03px;top:444.60px;width:0.80px;height:19.00px;background:repeating-linear-gradient(180deg,#62b0b6 0,#62b0b6 1px,transparent 1px,transparent 2px);"></div>
<div style="left:79.06px;top:444.60px;width:0.80px;height:19.00px;background:repeating-linear-gradient(180deg,#62b0b6 0,#62b0b6 1px,transparent 1px,transparent 2px);"></div>
<div style="left:91.09px;top:444.60px;width:0.80px;height:19.00px;background:repeating-linear-gradient(180deg,#62b0b6 0,#62b0b6 1px,transparent 1px,transparent 2px);"></div>
<div style="left:103.12px;top:444.60px;width:0.80px;height:19.00px;background:repeating-linear-gradient(180deg,#62b0b6 0,#62b0b6 1px,transparent 1px,transparent 2px);"></div>
<div style="left:55.00px;top:463.60px;width:0.80px;height:19.00px;background:repeating-linear-gradient(180deg,#62b0b6 0,#62b0b6 1px,transparent 1px,transparent 2px);"></div>
<div style="left:67.03px;top:463.60px;width:0.80px;height:19.00px;background:repeating-linear-gradient(180deg,#62b0b6 0,#62b0b6 1px,transparent 1px,transparent 2px);"></div>
<div style="left:79.06px;top:463.60px;width:0.80px;height:19.00px;background:repeating-linear-gradient(180deg,#62b0b6 0,#62b0b6 1px,transparent 1px,transparent 2px);"></div>
<div style="left:91.09px;top:463.60px;width:0.80px;height:19.00px;background:repeating-linear-gradient(180deg,#62b0b6 0,#62b0b6 1px,transparent 1px,transparent 2px);"></div>
<div style="left:55.00px;top:482.60px;width:0.80px;height:19.00px;background:repeating-linear-gradient(180deg,#62b0b6 0,#62b0b6 1px,transparent 1px,transparent 2px);"></div>
<div style="left:67.03px;top:482.60px;width:0.80px;height:19.00px;background:repeating-linear-gradient(180deg,#62b0b6 0,#62b0b6 1px,transparent 1px,transparent 2px);"></div>
<div style="left:79.06px;top:482.60px;width:0.80px;height:19.00px;background:repeating-linear-gradient(180deg,#62b0b6 0,#62b0b6 1px,transparent 1px,transparent 2px);"></div>
<div style="left:91.09px;top:482.60px;width:0.80px;height:19.00px;background:repeating-linear-gradient(180deg,#62b0b6 0,#62b0b6 1px,transparent 1px,transparent 2px);"></div>
<div style="left:103.12px;top:482.60px;width:0.80px;height:19.00px;background:repeating-linear-gradient(180deg,#62b0b6 0,#62b0b6 1px,transparent 1px,transparent 2px);"></div>
<div style="left:55.00px;top:501.60px;width:0.80px;height:19.00px;background:repeating-linear-gradient(180deg,#62b0b6 0,#62b0b6 1px,transparent 1px,transparent 2px);"></div>
<div style="left:67.03px;top:501.60px;width:0.80px;height:19.00px;background:repeating-linear-gradient(180deg,#62b0b6 0,#62b0b6 1px,transparent 1px,transparent 2px);"></div>
<div style="left:79.06px;top:501.60px;width:0.80px;height:19.00px;background:repeating-linear-gradient(180deg,#62b0b6 0,#62b0b6 1px,transparent 1px,transparent 2px);"></div>
<div style="left:91.09px;top:501.60px;width:0.80px;height:19.00px;background:repeating-linear-gradient(180deg,#62b0b6 0,#62b0b6 1px,transparent 1px,transparent 2px);"></div>
<div style="left:55.00px;top:520.60px;width:0.80px;height:19.00px;background:repeating-linear-gradient(180deg,#62b0b6 0,#62b0b6 1px,transparent 1px,transparent 2px);"></div>
<div style="left:67.03px;top:520.60px;width:0.80px;height:19.00px;background:repeating-linear-gradient(180deg,#62b0b6 0,#62b0b6 1px,transparent 1px,transparent 2px);"></div>
<div style="left:79.06px;top:520.60px;width:0.80px;height:19.00px;background:repeating-linear-gradient(180deg,#62b0b6 0,#62b0b6 1px,transparent 1px,transparent 2px);"></div>
<div style="left:91.09px;top:520.60px;width:0.80px;height:19.00px;background:repeating-linear-gradient(180deg,#62b0b6 0,#62b0b6 1px,transparent 1px,transparent 2px);"></div>
<div style="left:103.12px;top:520.60px;width:0.80px;height:19.00px;background:repeating-linear-gradient(180deg,#62b0b6 0,#62b0b6 1px,transparent 1px,transparent 2px);"></div>
<div style="left:563.30px;top:121.60px;width:0.80px;height:416.70px;background:repeating-linear-gradient(180deg,#62b0b6 0,#62b0b6 1px,transparent 1px,transparent 2px);"></div>
<div style="left:626.90px;top:121.60px;width:0.80px;height:416.70px;background:repeating-linear-gradient(180deg,#62b0b6 0,#62b0b6 1px,transparent 1px,transparent 2px);"></div>
<div style="left:690.20px;top:121.60px;width:0.80px;height:416.70px;background:repeating-linear-gradient(180deg,#62b0b6 0,#62b0b6 1px,transparent 1px,transparent 2px);"></div>
<div style="left:760.90px;top:121.60px;width:0.80px;height:416.70px;background:repeating-linear-gradient(180deg,#62b0b6 0,#62b0b6 1px,transparent 1px,transparent 2px);"></div>
<div style="left:811.40px;top:121.60px;width:0.80px;height:416.70px;background:repeating-linear-gradient(180deg,#62b0b6 0,#62b0b6 1px,transparent 1px,transparent 2px);"></div>
<div style="left:3.70px;top:84.10px;width:1.00px;height:454.20px;background:#6e6e6e;"></div>
<div style="left:42.10px;top:84.10px;width:1.00px;height:454.20px;background:#6e6e6e;"></div>
<div style="left:209.70px;top:84.10px;width:1.00px;height:454.20px;background:#6e6e6e;"></div>
<div style="left:271.70px;top:84.10px;width:1.00px;height:454.20px;background:#6e6e6e;"></div>
<div style="left:335.10px;top:84.10px;width:1.00px;height:454.20px;background:#6e6e6e;"></div>
<div style="left:398.60px;top:84.10px;width:1.00px;height:454.20px;background:#6e6e6e;"></div>
<div style="left:462.00px;top:84.10px;width:1.00px;height:454.20px;background:#6e6e6e;"></div>
<div style="left:525.40px;top:84.10px;width:1.00px;height:454.20px;background:#6e6e6e;"></div>
<div style="left:588.90px;top:84.10px;width:1.00px;height:454.20px;background:#6e6e6e;"></div>
<div style="left:652.40px;top:84.10px;width:1.00px;height:454.20px;background:#6e6e6e;"></div>
<div style="left:715.90px;top:84.10px;width:1.00px;height:454.20px;background:#6e6e6e;"></div>
<div style="left:779.50px;top:84.10px;width:1.00px;height:454.20px;background:#6e6e6e;"></div>
<div style="left:4.20px;top:83.60px;width:828.60px;height:1.00px;background:#6e6e6e;"></div>
<div style="left:4.20px;top:121.10px;width:828.60px;height:1.00px;background:#6e6e6e;"></div>
<div style="left:4.20px;top:140.10px;width:828.60px;height:1.00px;background:#6e6e6e;"></div>
<div style="left:4.20px;top:159.10px;width:828.60px;height:1.00px;background:#6e6e6e;"></div>
<div style="left:4.20px;top:178.10px;width:828.60px;height:1.00px;background:#6e6e6e;"></div>
<div style="left:4.20px;top:197.10px;width:828.60px;height:1.00px;background:#6e6e6e;"></div>
<div style="left:4.20px;top:216.10px;width:828.60px;height:1.00px;background:#6e6e6e;"></div>
<div style="left:4.20px;top:235.10px;width:828.60px;height:1.00px;background:#6e6e6e;"></div>
<div style="left:4.20px;top:254.10px;width:828.60px;height:1.00px;background:#6e6e6e;"></div>
<div style="left:4.20px;top:273.10px;width:828.60px;height:1.00px;background:#6e6e6e;"></div>
<div style="left:4.20px;top:292.10px;width:828.60px;height:1.00px;background:#6e6e6e;"></div>
<div style="left:4.20px;top:311.10px;width:828.60px;height:1.00px;background:#6e6e6e;"></div>
<div style="left:4.20px;top:330.10px;width:828.60px;height:1.00px;background:#6e6e6e;"></div>
<div style="left:4.20px;top:349.10px;width:828.60px;height:1.00px;background:#6e6e6e;"></div>
<div style="left:4.20px;top:368.10px;width:828.60px;height:1.00px;background:#6e6e6e;"></div>
<div style="left:4.20px;top:387.10px;width:828.60px;height:1.00px;background:#6e6e6e;"></div>
<div style="left:4.20px;top:406.10px;width:828.60px;height:1.00px;background:#6e6e6e;"></div>
<div style="left:4.20px;top:425.10px;width:828.60px;height:1.00px;background:#6e6e6e;"></div>
<div style="left:4.20px;top:444.10px;width:828.60px;height:1.00px;background:#6e6e6e;"></div>
<div style="left:4.20px;top:463.10px;width:828.60px;height:1.00px;background:#6e6e6e;"></div>
<div style="left:4.20px;top:482.10px;width:828.60px;height:1.00px;background:#6e6e6e;"></div>
<div style="left:4.20px;top:501.10px;width:828.60px;height:1.00px;background:#6e6e6e;"></div>
<div style="left:4.20px;top:520.10px;width:828.60px;height:1.00px;background:#6e6e6e;"></div>
<div style="left:4.20px;top:539.10px;width:828.60px;height:1.00px;background:#6e6e6e;"></div>
<div style="left:0.00px;top:0.00px;width:2.20px;height:538.30px;background:#fff;"></div>
<div style="left:0.00px;top:0.00px;width:832.80px;height:1.90px;background:#fff;"></div>
<div style="left:830.90px;top:0.00px;width:1.90px;height:538.30px;background:rgba(255,255,255,.6);"></div>
</div>
<div id="phone" style="left:838.40px;top:225.00px;width:192.60px;height:394.20px;border-radius:29px;background:#000;box-shadow:inset 0 0 0 0.6px #2a3448, inset -3px 0 0.4px 0 #7a90ae, inset 0 0 0 1.7px #a6b4c8, inset 0 0 0 2.5px #27324a;"></div>
<div style="left:1028.2px;top:327.2px;width:3.2px;height:44px;background:#93a7c2;border-top:0.8px solid #2c3a54;border-bottom:0.8px solid #2c3a54;border-radius:0 1px 1px 0;"></div>
<div id="pscreen" style="left:847.80px;top:234.60px;width:173.10px;height:376.20px;border-radius:19.5px;background:#f9f9f9;overflow:hidden;">
<div style="left:0.00px;top:0.00px;width:173.10px;height:19.00px;background:#ffcb62;"></div>
<div class="t" style="left:0.00px;top:5.34px;width:173.10px;height:7.00px;font-size:6px;font-weight:bold;color:#222;text-align:center;">出来高</div>
<div class="t" style="left:5.20px;top:38.34px;width:30.00px;height:7.00px;font-weight:500;font-size:6.1px;color:#222;">作業日</div>
<div style="left:43.50px;top:33.20px;width:63.00px;height:16.80px;background:#fff;border:0.8px solid #dcdcdc;border-radius:2.5px;"></div>
<div class="t" style="left:43.50px;top:37.24px;width:63.00px;height:8.00px;font-size:7.3px;color:#333;text-align:center;">2025/04/30</div>
<div class="t" style="left:142.20px;top:56.34px;width:21.00px;height:7.00px;font-weight:bold;font-size:6px;color:#222;text-align:right;">数量</div>
<div class="pn" style="left:8.50px;top:71.09px;width:100.00px;height:7.00px;">全科目</div>
<div style="left:92.20px;top:69.04px;width:76.40px;height:11.00px;overflow:hidden;"><span class="pv" style="right:-3.9px;top:2px;">1.00式</span></div>
<div style="left:5.20px;top:81.10px;width:163.40px;height:1.20px;background:#e0e0e0;"></div>
<div class="pn" style="left:14.82px;top:86.09px;width:100.00px;height:7.00px;">直接工事費</div>
<div style="left:92.20px;top:84.04px;width:76.40px;height:11.00px;overflow:hidden;"><span class="pv" style="right:-3.9px;top:2px;">1.00式</span></div>
<div style="left:5.20px;top:96.20px;width:163.40px;height:1.20px;background:#e0e0e0;"></div>
<div class="pn" style="left:21.14px;top:101.09px;width:100.00px;height:7.00px;">築堤･護岸</div>
<div style="left:92.20px;top:99.04px;width:76.40px;height:11.00px;overflow:hidden;"><span class="pv" style="right:-3.9px;top:2px;">1.00式</span></div>
<div style="left:5.20px;top:111.30px;width:163.40px;height:1.20px;background:#e0e0e0;"></div>
<div class="pn" style="left:27.46px;top:116.09px;width:100.00px;height:7.00px;">河川土工</div>
<div style="left:92.20px;top:114.04px;width:76.40px;height:11.00px;overflow:hidden;"><span class="pv" style="right:-3.9px;top:2px;">1.00式</span></div>
<div style="left:5.20px;top:126.20px;width:163.40px;height:1.20px;background:#e0e0e0;"></div>
<div class="pn" style="left:33.78px;top:131.09px;width:100.00px;height:7.00px;">盛土工 [流用土Ⅰ]</div>
<div style="left:92.20px;top:129.04px;width:76.40px;height:11.00px;overflow:hidden;"><span class="pv" style="right:-3.9px;top:2px;">1.00式</span></div>
<div style="left:5.20px;top:141.10px;width:163.40px;height:1.20px;background:#e0e0e0;"></div>
<div class="pn" style="left:40.10px;top:146.09px;width:100.00px;height:7.00px;">路体(築堤)盛土</div>
<div style="left:92.20px;top:144.04px;width:76.40px;height:11.00px;overflow:hidden;"><span class="pv" style="right:-3.0px;top:2px;">190.00m³</span></div>
<div style="left:5.20px;top:158.40px;width:163.40px;height:1.20px;background:#e0e0e0;"></div>
<div class="pn" style="left:40.10px;top:164.09px;width:100.00px;height:7.00px;">路体(築堤)盛土</div>
<div style="left:92.20px;top:161.04px;width:76.40px;height:11.00px;overflow:hidden;"><span class="pv" style="right:-3.0px;top:2px;">120.00m³</span></div>
<div style="left:5.20px;top:175.70px;width:163.40px;height:1.20px;background:#e0e0e0;"></div>
<div class="pn" style="left:33.78px;top:181.09px;width:100.00px;height:7.00px;">盛土工 [購入土]</div>
<div style="left:92.20px;top:179.04px;width:76.40px;height:11.00px;overflow:hidden;"><span class="pv" style="right:-3.9px;top:2px;">1.00式</span></div>
<div style="left:5.20px;top:190.60px;width:163.40px;height:1.20px;background:#e0e0e0;"></div>
<div class="pn" style="left:40.10px;top:195.09px;width:100.00px;height:7.00px;">路体(築堤)盛土</div>
<div style="left:92.20px;top:193.04px;width:76.40px;height:11.00px;overflow:hidden;"><span class="pv" style="right:-3.0px;top:2px;">360.00m³</span></div>
<div style="left:5.20px;top:207.40px;width:163.40px;height:1.20px;background:#e0e0e0;"></div>
<div class="pn" style="left:40.10px;top:213.09px;width:100.00px;height:7.00px;">土砂等運搬</div>
<div style="left:92.20px;top:211.04px;width:76.40px;height:11.00px;overflow:hidden;"><span class="pv" style="right:-3.0px;top:2px;">360.00m³</span></div>
<div style="left:5.20px;top:224.80px;width:163.40px;height:1.20px;background:#e0e0e0;"></div>
<div class="pn" style="left:33.78px;top:230.09px;width:100.00px;height:7.00px;">法面整形工</div>
<div style="left:92.20px;top:228.04px;width:76.40px;height:11.00px;overflow:hidden;"><span class="pv" style="right:-3.9px;top:2px;">1.00式</span></div>
<div style="left:5.20px;top:239.90px;width:163.40px;height:1.20px;background:#e0e0e0;"></div>
<div class="pn" style="left:40.10px;top:246.09px;width:100.00px;height:7.00px;">法面整形(盛土部)</div>
<div style="left:92.20px;top:244.04px;width:76.40px;height:11.00px;overflow:hidden;"><span class="pv" style="right:-3.0px;top:2px;">1200.00m²</span></div>
<div style="left:5.20px;top:257.40px;width:163.40px;height:1.20px;background:#e0e0e0;"></div>
<div class="pn" style="left:27.46px;top:262.09px;width:100.00px;height:7.00px;">法面工</div>
<div style="left:92.20px;top:260.04px;width:76.40px;height:11.00px;overflow:hidden;"><span class="pv" style="right:-3.9px;top:2px;">1.00式</span></div>
<div style="left:5.20px;top:272.50px;width:163.40px;height:1.20px;background:#e0e0e0;"></div>
<div class="pn" style="left:33.78px;top:277.09px;width:100.00px;height:7.00px;">植生工</div>
<div style="left:92.20px;top:275.04px;width:76.40px;height:11.00px;overflow:hidden;"><span class="pv" style="right:-3.9px;top:2px;">1.00式</span></div>
<div style="left:5.20px;top:289.70px;width:163.40px;height:1.20px;background:#e0e0e0;"></div>
<div class="pn" style="left:40.10px;top:295.09px;width:100.00px;height:7.00px;">張芝</div>
<div style="left:92.20px;top:293.04px;width:76.40px;height:11.00px;overflow:hidden;"><span class="pv" style="right:-3.0px;top:2px;">1500.00m²</span></div>
<div style="left:5.20px;top:307.10px;width:163.40px;height:1.20px;background:#e0e0e0;"></div>
<div class="pn" style="left:27.46px;top:312.09px;width:100.00px;height:7.00px;">付帯道路工</div>
<div style="left:92.20px;top:310.04px;width:76.40px;height:11.00px;overflow:hidden;"><span class="pv" style="right:-3.9px;top:2px;">1.00式</span></div>
<div style="left:5.20px;top:322.30px;width:163.40px;height:1.20px;background:#e0e0e0;"></div>
<div class="pn" style="left:33.78px;top:327.09px;width:100.00px;height:7.00px;">作業土工</div>
<div style="left:92.20px;top:324.04px;width:76.40px;height:11.00px;overflow:hidden;"><span class="pv" style="right:-3.9px;top:2px;">1.00式</span></div>
<div style="left:5.20px;top:337.40px;width:163.40px;height:1.20px;background:#e0e0e0;"></div>
<div class="pn" style="left:40.10px;top:341.09px;width:100.00px;height:7.00px;">床掘り</div>
<div style="left:92.20px;top:339.04px;width:76.40px;height:11.00px;overflow:hidden;"><span class="pv" style="right:-3.0px;top:2px;">350.00m³</span></div>
<div style="left:5.20px;top:354.20px;width:163.40px;height:1.20px;background:#e0e0e0;"></div>
<div class="pn" style="left:33.78px;top:359.09px;width:100.00px;height:7.00px;">舗装準備工</div>
<div style="left:92.20px;top:356.04px;width:76.40px;height:11.00px;overflow:hidden;"><span class="pv" style="right:-3.9px;top:2px;">1.00式</span></div>
<div style="left:5.20px;top:369.30px;width:163.40px;height:1.20px;background:#e0e0e0;"></div>
<div class="pn" style="left:40.10px;top:373.09px;width:100.00px;height:7.00px;">不陸整正</div>
<div style="left:92.20px;top:371.04px;width:76.40px;height:11.00px;overflow:hidden;"><span class="pv" style="right:-3.0px;top:2px;">1540.00m²</span></div>
<div style="left:5.20px;top:386.70px;width:163.40px;height:1.20px;background:#e0e0e0;"></div>
</div>
<svg style="left:1007.2px;top:237.8px" width="12.8" height="12.8" viewBox="0 0 12.8 12.8"><defs><radialGradient id="cg" cx="50%" cy="40%" r="60%"><stop offset="0" stop-color="#c8c8c8"/><stop offset="1" stop-color="#a6a6a6"/></radialGradient></defs><circle cx="6.4" cy="6.4" r="5.7" fill="#fbfbfb"/><circle cx="6.4" cy="6.4" r="4.5" fill="url(#cg)"/><rect x="3.5" y="5" width="5.8" height="2.9" rx="1.2" fill="#e2e2e2" stroke="#b4b4b4" stroke-width=".4"/></svg>
</body></html>
